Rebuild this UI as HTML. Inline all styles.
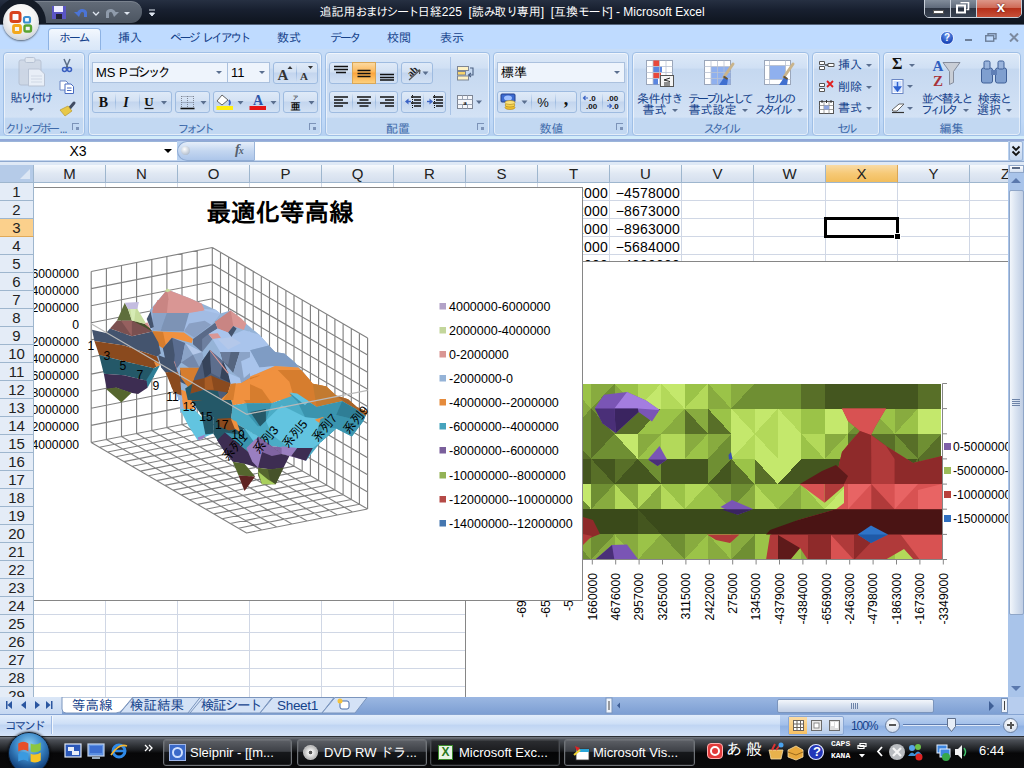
<!DOCTYPE html>
<html lang="ja">
<head>
<meta charset="utf-8">
<title>Microsoft Excel</title>
<style>
*{box-sizing:border-box;margin:0;padding:0}
html,body{width:1024px;height:768px;overflow:hidden;background:#fff}
body{position:relative;font-family:"Liberation Sans","IPAGothic",sans-serif;font-size:12px;color:#15428b}
.abs{position:absolute}
#titlebar{left:0;top:0;width:1024px;height:25px;background:linear-gradient(#263042 0,#182030 40%,#0e141e 100%);border-bottom:1px solid #56647a}
#title{left:0;top:5px;width:1024px;text-align:center;color:#fff;font-size:12px;letter-spacing:0px;white-space:nowrap}
#tabrow{left:0;top:25px;width:1024px;height:24px;background:#bfdbff}
#ribbon{left:0;top:49px;width:1024px;height:90px;background:linear-gradient(#c6dcf7,#bfd8f7 80%,#b4cff0)}
.tab{top:31px;font-size:12px;color:#15428b;white-space:nowrap}
.grp{top:52px;height:84px;border:1px solid #9fbfe6;border-radius:4px;background:linear-gradient(#dde9f8 0,#d0e0f4 18%,#c5d8f0 20%,#d3e2f5 78%,#c2d8f2 80%,#c2d8f2 100%);box-shadow:inset 0 0 0 1px rgba(255,255,255,.55)}
.glabel{bottom:-1.5px;left:0;right:0;height:15px;text-align:center;font-size:12px;color:#3e6aaa;line-height:15px;white-space:nowrap}
#fbar{left:0;top:139px;width:1024px;height:26px;background:#b9d1f0}
#sheet{left:0;top:165px;width:1010px;height:532px;background:#fff;overflow:hidden}
.ch{top:0;height:18px;border-right:1px solid #9eb6ce;border-bottom:1px solid #9eb6ce;background:linear-gradient(#f6f9fd,#e0e8f3 50%,#d5dfee);text-align:center;font-size:15px;line-height:18px;color:#222}
.rh{z-index:5;left:0;width:34px;height:18px;border-right:1px solid #9eb6ce;border-bottom:1px solid #9eb6ce;background:#e4ecf7;text-align:center;font-size:15px;line-height:17px;color:#222}

.bg{height:22px;border:1px solid #9ebbe0;border-radius:3px;background:linear-gradient(#dfeaf8 0,#d3e1f3 45%,#c3d5ee 50%,#d2e1f4 100%)}
.sep{top:1px;width:1px;height:18px;background:linear-gradient(rgba(158,187,224,0),#9ebbe0 50%,rgba(158,187,224,0))}
.combo{height:21px;border:1px solid #abc1de;background:#eef4fc;color:#000;font-size:13px;line-height:19px;padding-left:3px;white-space:nowrap}
.dd{width:0;height:0;border-left:3px solid transparent;border-right:3px solid transparent;border-top:3px solid #5a6f8f}
.big{font-size:12px;line-height:12px;text-align:center;white-space:nowrap;color:#15428b}
.launch{width:7px;height:7px;border-left:1px solid #7c93b8;border-top:1px solid #7c93b8;bottom:5px}
.launch:after{content:"";position:absolute;right:0;bottom:0;width:3px;height:3px;background:#7c93b8}

.cv{margin-top:1px;height:17px;text-align:right;font-size:14px;letter-spacing:.2px;line-height:19px;color:#000;white-space:nowrap;overflow:hidden;font-family:"Liberation Sans","IPAGothic",sans-serif}

#fbar .wh{background:#fff;border-top:1px solid #9bb5d9;border-bottom:1px solid #c5d6ee}
.tbtn{top:739px;height:27px;border:1px solid #6f7378;border-radius:3px;background:linear-gradient(#5d6066 0,#3e4147 45%,#16181b 50%,#0b0c0e 100%);color:#fff;font-size:13px;line-height:25px;white-space:nowrap;overflow:hidden;box-shadow:inset 0 0 0 1px rgba(255,255,255,.08)}
.tbtn span{position:absolute;left:26px;top:0}
.stab{top:698px;height:16px;font-size:13.5px;line-height:16px;color:#15428b;white-space:nowrap}
.k{letter-spacing:-1.6px}
</style>
</head>
<body>
<div id="titlebar" class="abs"></div>
<div id="title" class="abs">追記用<span class="k">おまけシート</span>日経225&nbsp; [読<span class="k">み</span>取<span class="k">り</span>専用]&nbsp; [互換<span class="k">モード</span>] - Microsoft Excel</div>
<div id="tabrow" class="abs"></div>
<div id="ribbon" class="abs"></div>
<!-- window controls -->
<div class="abs" style="left:924px;top:-3px;width:98px;height:21px;border:1px solid #c9d0da;border-radius:0 0 5px 5px;overflow:hidden;background:#39414e">
  <div class="abs" style="left:0;top:0;width:26px;height:20px;background:linear-gradient(#8a95a3 0,#606b7b 48%,#2c3442 52%,#3a4454 100%);border-right:1px solid #c9d0da"></div>
  <div class="abs" style="left:26px;top:0;width:26px;height:20px;background:linear-gradient(#8a95a3 0,#606b7b 48%,#2c3442 52%,#3a4454 100%);border-right:1px solid #c9d0da"></div>
  <div class="abs" style="left:52px;top:0;width:46px;height:20px;background:linear-gradient(#e0a296 0,#cf6b58 48%,#b5301a 52%,#c9533c 100%)"></div>
  <div class="abs" style="left:8px;top:12px;width:11px;height:4px;background:#fff;border:1px solid #555"></div>
  <svg class="abs" style="left:31px;top:4px" width="14" height="12" viewBox="0 0 14 12"><path d="M4.5 0.5h8v7h-2" fill="none" stroke="#fff" stroke-width="1.6"/><rect x="1" y="3.5" width="8" height="7" fill="none" stroke="#fff" stroke-width="2"/></svg>
  <div class="abs" style="left:66px;top:0px;width:20px;color:#fff;font:bold 15px 'Liberation Sans',sans-serif;text-align:center;text-shadow:0 0 2px #400">x</div>
</div>
<!-- office button -->
<div class="abs" style="left:3px;top:4px;width:36px;height:36px;border-radius:50%;background:radial-gradient(circle at 50% 35%,#ffffff 0,#f4f4f4 45%,#d9dce0 72%,#a9afb8 100%);box-shadow:0 1px 2px rgba(0,0,0,.55);z-index:3"></div>
<svg class="abs" style="left:8px;top:9px;z-index:4" width="26" height="26" viewBox="0 0 26 26">
 <rect x="3" y="3.500" width="9" height="9" rx="2" fill="none" stroke="#d8431d" stroke-width="3"/>
 <rect x="16" y="8" width="6" height="5.500" rx="1.500" fill="none" stroke="#3a8fd0" stroke-width="2.200"/>
 <rect x="5.500" y="16.500" width="7" height="7" rx="1.500" fill="none" stroke="#f3a81c" stroke-width="2.800"/>
 <rect x="16.500" y="16.500" width="6.500" height="6" rx="1.500" fill="none" stroke="#58a430" stroke-width="2.400"/>
</svg>
<!-- QAT -->
<div class="abs" style="left:30px;top:1px;width:112px;height:22px;border-radius:0 11px 11px 0;background:linear-gradient(#626b78,#4c5561);border-top:1px solid #7a828e"></div>
<div class="abs" style="left:0;top:0;width:60px;height:24px;overflow:hidden"><div class="abs" style="left:-4px;top:-3px;width:50px;height:50px;border-radius:50%;background:#141b27"></div></div>
<svg class="abs" style="left:50px;top:4px" width="110" height="18" viewBox="0 0 110 18">
 <rect x="2" y="2" width="14" height="13" fill="#5a55c4"/><rect x="4" y="2" width="9" height="6" fill="#eef"/><rect x="6" y="10" width="6" height="5" fill="#223"/>
 <path d="M27 10c0-5 8-7 10-2v5h-3v-4c-1-2-4-1-4 1z" fill="#4b74d6"/><path d="M24 8l5 5 2-5z" fill="#4b74d6"/>
 <path d="M43 8l3 3 3-3" fill="none" stroke="#dfe6f0" stroke-width="1.3"/>
 <path d="M66 10c0-5-8-7-10-2v6h3v-5c1-2 4-1 4 1z" fill="#8f9bab"/><path d="M69 8l-5 5-2-5z" fill="#8f9bab"/>
 <path d="M74 8l3 3 3-3z" fill="#dfe6f0"/>
 <path d="M99 6h6M99.500 9l2.500 3 2.500-3z" stroke="#dfe6f0" fill="#dfe6f0" stroke-width="1"/>
</svg>
<!-- tabs -->
<div class="abs" style="left:48px;top:28px;width:53px;height:22px;border:1px solid #8db2e3;border-bottom:none;border-radius:4px 4px 0 0;background:linear-gradient(#f3f8fe,#e1ecfa 60%,#d9e7f8)"></div>
<div class="abs tab" style="left:59px;letter-spacing:-2.3px">ホーム</div>
<div class="abs tab" style="left:118px">挿入</div>
<div class="abs tab" style="left:170px;letter-spacing:-2.6px;word-spacing:3px">ページ レイアウト</div>
<div class="abs tab" style="left:277px">数式</div>
<div class="abs tab" style="left:330px;letter-spacing:-2.3px">データ</div>
<div class="abs tab" style="left:387px">校閲</div>
<div class="abs tab" style="left:440px">表示</div>
<!-- help & mdi controls -->
<div class="abs" style="left:940px;top:31px;width:14px;height:14px;border-radius:50%;background:radial-gradient(circle at 50% 30%,#6f9cf0,#1b46b8 70%);border:1px solid #dfeaff;color:#fff;font:bold 10px 'Liberation Sans',sans-serif;text-align:center;line-height:12px">?</div>
<div class="abs" style="left:965px;top:39px;width:7px;height:2px;background:#6d7f99"></div>
<svg class="abs" style="left:985px;top:33px" width="12" height="9" viewBox="0 0 12 9"><path d="M3 2V0.800h8v5h-2" fill="none" stroke="#6d7f99" stroke-width="1.4"/><rect x="0.700" y="2.700" width="8" height="5.500" fill="none" stroke="#6d7f99" stroke-width="1.4"/></svg>
<svg class="abs" style="left:1009px;top:33px" width="10" height="9" viewBox="0 0 10 9"><path d="M1 0.500l8 8M9 0.500l-8 8" stroke="#7c8aa0" stroke-width="2"/></svg>


<!--RIBBON--><div class="abs grp" style="left:3px;width:82px"><div class="abs glabel" style="text-align:left;padding-left:1px;letter-spacing:0"><span style="letter-spacing:-3.4px">クリップボー</span><span style="letter-spacing:-1px;margin-left:3px">...</span></div><div class="abs launch" style="right:5px"></div></div>
<div class="abs grp" style="left:88px;width:234px"><div class="abs glabel" style="letter-spacing:-3.5px;left:105.5px;right:auto;width:80px;margin-left:-40px">フォント</div><div class="abs launch" style="right:5px"></div></div>
<div class="abs grp" style="left:325px;width:165px"><div class="abs glabel" style="letter-spacing:0;left:72px;right:auto;width:80px;margin-left:-40px">配置</div><div class="abs launch" style="right:5px"></div></div>
<div class="abs grp" style="left:493px;width:136px"><div class="abs glabel" style="letter-spacing:0;left:57.5px;right:auto;width:80px;margin-left:-40px">数値</div><div class="abs launch" style="right:5px"></div></div>
<div class="abs grp" style="left:632px;width:177px"><div class="abs glabel" style="letter-spacing:-3.5px;left:87.5px;right:auto;width:80px;margin-left:-40px">スタイル</div></div>
<div class="abs grp" style="left:812px;width:68px"><div class="abs glabel" style="letter-spacing:-3.5px;left:32.5px;right:auto;width:80px;margin-left:-40px">セル</div></div>
<div class="abs grp" style="left:883px;width:138px"><div class="abs glabel" style="letter-spacing:0;left:67.5px;right:auto;width:80px;margin-left:-40px">編集</div></div>
<div class="abs big" style="left:0px;top:92px;width:62px;font-size:12px;letter-spacing:-1.7px">貼り付け</div>
<div class="abs dd" style="left:28px;top:108px"></div>
<div class="abs combo" style="left:92px;top:62px;width:136px">MS P<span style="letter-spacing:-3px">ゴシック</span></div>
<div class="abs dd" style="left:216px;top:71px"></div>
<div class="abs combo" style="left:227px;top:62px;width:43px">11</div>
<div class="abs dd" style="left:259px;top:71px"></div>
<div class="abs bg" style="left:273px;top:62px;width:45px"><div class="abs sep" style="left:22px"></div></div>
<div class="abs bg" style="left:92px;top:91px;width:80px"><div class="abs sep" style="left:22px"></div><div class="abs sep" style="left:46px"></div></div>
<div class="abs bg" style="left:175px;top:91px;width:35px"></div>
<div class="abs bg" style="left:213px;top:91px;width:67px"></div>
<div class="abs bg" style="left:283px;top:91px;width:35px"></div>
<div class="abs bg" style="left:329px;top:62px;width:69px"><div class="abs" style="left:22px;top:-1px;width:24px;height:22px;background:linear-gradient(#fbd9a0,#fdb759 45%,#fca43c 50%,#fdd07c);border:1px solid #d9a757"></div></div>
<div class="abs bg" style="left:401px;top:62px;width:32px"></div>
<div class="abs bg" style="left:329px;top:91px;width:69px"><div class="abs sep" style="left:22px"></div><div class="abs sep" style="left:45px"></div></div>
<div class="abs bg" style="left:401px;top:91px;width:45px"><div class="abs sep" style="left:21px"></div></div>
<div class="abs" style="left:450px;top:57px;width:1px;height:58px;background:#a9c3e6"></div>
<div class="abs combo" style="left:497px;top:62px;width:128px">標準</div>
<div class="abs dd" style="left:614px;top:71px"></div>
<div class="abs bg" style="left:497px;top:91px;width:80px"><div class="abs sep" style="left:33px"></div><div class="abs sep" style="left:57px"></div></div>
<div class="abs bg" style="left:580px;top:91px;width:45px"><div class="abs sep" style="left:21px"></div></div>
<div class="abs big" style="left:660px;top:93px;width:100px;margin-left:-50px;font-size:12px;letter-spacing:-.5px">条件付き</div>
<div class="abs big" style="left:660px;top:104px;width:100px;margin-left:-50px;font-size:12px;letter-spacing:0">書式<span class="dd" style="display:inline-block;vertical-align:middle;margin-left:5px"></span></div>
<div class="abs big" style="left:719.5px;top:93px;width:100px;margin-left:-50px;font-size:12px;letter-spacing:-3px">テーブルとして</div>
<div class="abs big" style="left:718px;top:104px;width:100px;margin-left:-50px;font-size:12px;letter-spacing:0">書式設定<span class="dd" style="display:inline-block;vertical-align:middle;margin-left:5px"></span></div>
<div class="abs big" style="left:779px;top:93px;width:100px;margin-left:-50px;font-size:12px;letter-spacing:-2.2px">セルの</div>
<div class="abs big" style="left:779px;top:104px;width:100px;margin-left:-50px;font-size:12px;letter-spacing:-3.5px">スタイル<span class="dd" style="display:inline-block;vertical-align:middle;margin-left:8px"></span></div>
<div class="abs big" style="left:838px;top:59px;font-size:12px">挿入</div><div class="abs dd" style="left:866px;top:64px"></div>
<div class="abs big" style="left:838px;top:80.5px;font-size:12px">削除</div><div class="abs dd" style="left:866px;top:85.5px"></div>
<div class="abs big" style="left:838px;top:102px;font-size:12px">書式</div><div class="abs dd" style="left:866px;top:107px"></div>
<div class="abs" style="left:892px;top:55px;font:bold 16px 'Liberation Serif',serif;color:#111">Σ</div><div class="abs dd" style="left:909px;top:64px"></div>
<div class="abs dd" style="left:907px;top:85px"></div><div class="abs dd" style="left:907px;top:107px"></div>
<div class="abs big" style="left:946.5px;top:93px;width:100px;margin-left:-50px;font-size:12px;letter-spacing:-2px">並べ替えと</div>
<div class="abs big" style="left:945px;top:104px;width:100px;margin-left:-50px;font-size:12px;letter-spacing:-3.5px">フィルタ<span class="dd" style="display:inline-block;vertical-align:middle;margin-left:8px"></span></div>
<div class="abs big" style="left:994.5px;top:93px;width:100px;margin-left:-50px;font-size:12px;letter-spacing:-1px">検索と</div>
<div class="abs big" style="left:994.5px;top:104px;width:100px;margin-left:-50px;font-size:12px;letter-spacing:0">選択<span class="dd" style="display:inline-block;vertical-align:middle;margin-left:5px"></span></div>
<svg class="abs" style="left:0;top:0" width="1024" height="140" viewBox="0 0 1024 140">
<g opacity=".75"><rect x="19" y="60" width="22" height="25" rx="2" fill="#cfd6e2" stroke="#aeb8c9"/><rect x="25" y="57.500" width="10" height="5" rx="1.500" fill="#e4e8ef" stroke="#aeb8c9"/><path d="M28.500 69h11l5 5v12h-16z" fill="#f4f6fa" stroke="#b4bccb"/><path d="M31 76h11M31 79h11M31 82h11" stroke="#d2d8e2"/></g>
<path d="M64 59l4 9M70 59l-4 9" stroke="#5a6d86" stroke-width="1.500"/><circle cx="64.500" cy="69.500" r="2" fill="none" stroke="#3a5fc0" stroke-width="1.500"/><circle cx="69.500" cy="69.500" r="2" fill="none" stroke="#3a5fc0" stroke-width="1.500"/>
<path d="M60 81h6l2 2v7h-8z" fill="#fff" stroke="#6a86c4"/><path d="M65 84h6l2.500 2.500v7H65z" fill="#fff" stroke="#4a6cc0"/><path d="M67 88h4.500M67 90.500h4.500" stroke="#4a6cc0"/>
<path d="M74 103l-5 6" stroke="#3f4b63" stroke-width="3" stroke-linecap="round"/><path d="M60 110l8-4 4 5-7 5z" fill="#e8c848" stroke="#b89a30" stroke-width=".7"/>
<text x="103.500" y="107" text-anchor="middle" font-family="'Liberation Serif',serif" font-weight="bold" font-size="14" fill="#111">B</text>
<text x="126" y="107" text-anchor="middle" font-family="'Liberation Serif',serif" font-style="italic" font-weight="bold" font-size="14" fill="#111">I</text>
<text x="149" y="106" text-anchor="middle" font-family="'Liberation Serif',serif" font-weight="bold" font-size="13" fill="#111">U</text><path d="M144.500 108.500h9" stroke="#111" stroke-width="1.200"/>
<path d="M161 101h6l-3 3.500z" fill="#5a6f8f"/>
<path d="M181.500 96v12M187.500 96v12M193.500 96v12M181.500 96.500h12M181.500 102.500h12" stroke="#7d8594" stroke-dasharray="1 1"/><path d="M180.500 108.500h14" stroke="#111" stroke-width="1.600"/><path d="M200.500 101h6l-3 3.500z" fill="#5a6f8f"/>
<path d="M222 95l6 5-6 5-5-4z" fill="#fff" stroke="#555" stroke-width=".9"/><path d="M229 100q2 3 0 5" stroke="#3a62c4" stroke-width="1.800" fill="none"/><rect x="216.500" y="106" width="16.500" height="4" fill="#ffee10"/><path d="M237.500 101h6l-3 3.500z" fill="#5a6f8f"/>
<text x="258" y="104.500" text-anchor="middle" font-family="'Liberation Serif',serif" font-weight="bold" font-size="14" fill="#2d55a8">A</text><rect x="249.500" y="106" width="16.500" height="4" fill="#e61616"/><path d="M270.500 101h6l-3 3.500z" fill="#5a6f8f"/>
<text x="295.500" y="100" text-anchor="middle" font-family="'Liberation Sans','IPAGothic',sans-serif" font-size="6" fill="#111">ア</text><text x="295.500" y="109.500" text-anchor="middle" font-family="'Liberation Sans','IPAGothic',sans-serif" font-size="10" font-weight="bold" fill="#111">亜</text><path d="M308.500 101h6l-3 3.500z" fill="#5a6f8f"/>
<text x="283" y="79.500" text-anchor="middle" font-family="'Liberation Serif',serif" font-weight="bold" font-size="15" fill="#333">A</text><path d="M287.500 69l2.500-3 2.500 3z" fill="#333"/>
<text x="304" y="79.500" text-anchor="middle" font-family="'Liberation Serif',serif" font-weight="bold" font-size="11" fill="#333">A</text><path d="M308 66h5l-2.500 3z" fill="#333"/>
<path d="M334 66.500h14M334 69.500h14M336 72.500h10" stroke="#111" stroke-width="1.300"/>
<path d="M357.500 70.500h13M357.500 73.500h13M357.500 76.500h13" stroke="#111" stroke-width="1.300"/>
<path d="M380 74.500h14M380 77.500h14M380 80h14" stroke="#111" stroke-width="1.300"/>
<g transform="translate(414 73) rotate(-45)"><text x="0" y="1" text-anchor="middle" font-family="'Liberation Serif',serif" font-size="10" font-weight="bold" fill="#222">ab</text></g><path d="M409 80l11-10M420 70l-4 .5M420 70l-.5 4" stroke="#555" stroke-width="1.200" fill="none"/><path d="M422.500 71.500h6l-3 3.500z" fill="#5a6f8f"/>
<path d="M334 97h14M334 100h9M334 103h14M334 106h9" stroke="#111" stroke-width="1.400"/>
<path d="M357 97h14M359.500 100h9M357 103h14M359.500 106h9" stroke="#111" stroke-width="1.400"/>
<path d="M380 97h14M385 100h9M380 103h14M385 106h9" stroke="#111" stroke-width="1.400"/>
<path d="M411 97h10M414 100h7M411 103h10M414 106h7" stroke="#111" stroke-width="1.400"/><path d="M412.500 95v14" stroke="#111" stroke-dasharray="1 1"/><path d="M405 101.500l3.500-3v6z" fill="#3a62c4"/><path d="M408 101.500h3" stroke="#3a62c4" stroke-width="1.400"/>
<path d="M433 97h10M436 100h7M433 103h10M436 106h7" stroke="#111" stroke-width="1.400"/><path d="M434.500 95v14" stroke="#111" stroke-dasharray="1 1"/><path d="M433 101.500l-3.500-3v6z" fill="#3a62c4"/><path d="M427 101.500h3" stroke="#3a62c4" stroke-width="1.400"/>
<rect x="457.500" y="66.500" width="11" height="4" fill="#fdf1c4" stroke="#7d8594"/><rect x="457.500" y="71.500" width="8" height="3.500" fill="#f6d36a" stroke="#7d8594"/><rect x="457.500" y="76" width="11" height="4" fill="#fdf1c4" stroke="#7d8594"/><path d="M470 68h3v7h-4M471 73l-2.500 2 2.500 2" fill="none" stroke="#4a5f80" stroke-width="1.100"/>
<rect x="457.500" y="95.500" width="15" height="13" fill="#f4f6fa" stroke="#7d8594"/><path d="M457.500 99.500h15M457.500 104.500h15M462.500 95.500v4M467.500 95.500v4M462.500 104.500v4M467.500 104.500v4" stroke="#9aa3b3"/><text x="465" y="104.500" text-anchor="middle" font-family="'Liberation Serif',serif" font-weight="bold" font-size="7" fill="#111">a</text><path d="M476 100.500h6l-3 3.500z" fill="#5a6f8f"/>
<rect x="501" y="94" width="14" height="8" rx="1" fill="#3c6ad0" stroke="#24408c"/><ellipse cx="508" cy="98" rx="4" ry="2.500" fill="#9fc0ff"/><ellipse cx="510" cy="107.500" rx="5" ry="2" fill="#f0c030" stroke="#a8821c" stroke-width=".6"/><ellipse cx="510" cy="105" rx="5" ry="2" fill="#f6d24c" stroke="#a8821c" stroke-width=".6"/><ellipse cx="510" cy="102.500" rx="5" ry="2" fill="#fbe27a" stroke="#a8821c" stroke-width=".6"/><path d="M521.500 100.500h6l-3 3.500z" fill="#5a6f8f"/>
<text x="543" y="107" text-anchor="middle" font-family="'Liberation Sans',sans-serif" font-size="13" fill="#111">%</text>
<text x="566" y="105" text-anchor="middle" font-family="'Liberation Serif',serif" font-weight="bold" font-size="18" fill="#111">,</text>
<g font-family="'Liberation Sans',sans-serif" font-weight="bold" font-size="8" fill="#111"><text x="589" y="101">.0</text><text x="586" y="108.500">.00</text><text x="607" y="101">.00</text><text x="612" y="108.500">.0</text></g><path d="M588 98h-4M585.500 96l-2 2 2 2" stroke="#3a62c4" stroke-width="1.200" fill="none"/><path d="M607 106h4M609.500 104l2 2-2 2" stroke="#3a62c4" stroke-width="1.200" fill="none"/>
<rect x="646.500" y="60.500" width="26" height="24" fill="#fff" stroke="#9aa6ba"/><rect x="653" y="60.500" width="6.500" height="6" fill="#e8483c"/><rect x="653" y="66.500" width="9" height="6" fill="#5a86e0"/><rect x="653" y="72.500" width="8" height="6" fill="#e8483c"/><rect x="653" y="78.500" width="5" height="6" fill="#5a86e0"/><path d="M646.500 66.500h26M646.500 72.500h26M646.500 78.500h26M653 60.500v24M659.500 60.500v24M666 60.500v24" stroke="#b9c2d2" stroke-width=".8" fill="none"/><rect x="660.500" y="75.500" width="13" height="11" fill="#f4f4f4" stroke="#555"/><path d="M670 78l-6 2 6 1.500M664 83h6M664 85h6" stroke="#111" fill="none" stroke-width=".9"/>
<rect x="704.500" y="60.500" width="26" height="24" fill="#fff" stroke="#9aa6ba"/><rect x="711" y="66.500" width="19.500" height="18" fill="#8fb0ee"/><path d="M704.500 66.500h26M704.500 72.500h26M704.500 78.500h26M711 60.500v24M717.500 60.500v24M724 60.500v24" stroke="#b9c2d2" stroke-width=".8" fill="none"/><path d="M733 64l-9 13" stroke="#c9b48c" stroke-width="3" stroke-linecap="round"/><path d="M725 76l-6 9h8l1-6z" fill="#3f6fd0"/><path d="M723.500 76.500l4 2.500" stroke="#6b5530" stroke-width="2"/>
<rect x="764.500" y="60.500" width="26" height="24" fill="#fff" stroke="#9aa6ba"/><rect x="769.500" y="65.500" width="16" height="14" fill="#8fb0ee" stroke="#b9c2d2"/><path d="M764.500 65.500h26M764.500 79.500h26M769.500 60.500v24M785.500 60.500v24" stroke="#b9c2d2" stroke-width=".8" fill="none"/><path d="M793 64l-9 13" stroke="#c9b48c" stroke-width="3" stroke-linecap="round"/><path d="M785 76l-6 9h8l1-6z" fill="#3f6fd0"/><path d="M783.500 76.500l4 2.500" stroke="#6b5530" stroke-width="2"/>
<path d="M819.500 61.500h5v3h-5zM819.500 66.500h5v3h-5z" fill="#fff" stroke="#555"/><path d="M828 63.500h6v3h-6z" fill="#fff" stroke="#555"/><path d="M825 65h3" stroke="#222" stroke-width="1.200"/>
<path d="M819.500 83.500h5v3h-5zM819.500 88.500h5v3h-5z" fill="#fff" stroke="#555"/><path d="M827 81l6 6M833 81l-6 6" stroke="#e02020" stroke-width="1.800"/>
<rect x="819.500" y="101.500" width="14" height="12" fill="#fff" stroke="#555"/><path d="M819.500 105.500h14M819.500 109.500h14M824 101.500v12M829 101.500v12" stroke="#888" stroke-width=".8"/><rect x="824" y="105.500" width="5" height="4" fill="#8fa6e0"/><path d="M822 100v3M826.500 100v3M831 100v3" stroke="#333" stroke-width="1"/>
<rect x="892" y="79.500" width="11" height="14" fill="#fff" stroke="#6a86c4"/><rect x="893.500" y="81" width="8" height="11" fill="#cfe0ff"/><path d="M897.500 82v5h-3l3 4 3-4h-3" fill="#2f62d0" stroke="#2f62d0" stroke-width="1.500"/>
<path d="M892 110l7-6h5l-7 7h-4z" fill="#fff" stroke="#555" stroke-width=".9"/><path d="M892 112.500h12" stroke="#333" stroke-width="1.200"/>
<text x="938" y="71" text-anchor="middle" font-family="'Liberation Serif',serif" font-weight="bold" font-size="15" fill="#2f5fc0">A</text><text x="938" y="85.500" text-anchor="middle" font-family="'Liberation Serif',serif" font-weight="bold" font-size="15" fill="#a8323a">Z</text><path d="M943 62.500h17l-6.500 9v11l-4 2v-13z" fill="#c9ced6" stroke="#7d8594" stroke-width=".9"/>
<rect x="981.500" y="68" width="11" height="15" rx="2" fill="#7f9fcf" stroke="#3f5f96"/><rect x="995.500" y="68" width="11" height="15" rx="2" fill="#7f9fcf" stroke="#3f5f96"/><rect x="984" y="61" width="6" height="8" rx="1.500" fill="#9ab4dc" stroke="#3f5f96"/><rect x="998" y="61" width="6" height="8" rx="1.500" fill="#9ab4dc" stroke="#3f5f96"/><rect x="991" y="70" width="6" height="5" fill="#5f7fb6"/>
</svg><!--/RIBBON-->
<div class="abs" style="left:0;top:136px;width:1024px;height:3px;background:#d3ecfa"></div><div id="fbar" class="abs"><div class="abs" style="left:0;top:0;width:1024px;height:2px;background:#92a8d8"></div><div class="abs" style="left:0;top:22px;width:1024px;height:4px;background:#dfe9f6;border-top:1px solid #8fa9cf"></div>
<div class="abs wh" style="left:0;top:2px;width:177px;height:20px"></div>
<div class="abs" style="left:0;top:4px;width:156px;text-align:center;font-size:14px;color:#000">X3</div>
<div class="abs" style="left:164px;top:10px;width:0;height:0;border-left:4px solid transparent;border-right:4px solid transparent;border-top:4px solid #000"></div>
<div class="abs" style="left:177px;top:2px;width:77px;height:20px;border-radius:10px 0 0 10px;background:linear-gradient(#e6eefa,#c3d6f0 50%,#adc6ea);border:1px solid #8fabd3;border-right:none"></div>
<div class="abs" style="left:181px;top:7px;width:9px;height:9px;border-radius:50%;background:radial-gradient(circle at 40% 35%,#fff,#b8c3d2 70%,#8794a8)"></div>
<div class="abs" style="left:235px;top:3px;font:italic bold 14px 'Liberation Serif',serif;color:#555f6e;letter-spacing:-1px">f<span style="font-size:10px">x</span></div>
<div class="abs wh" style="left:254px;top:2px;width:754px;height:20px;border-left:1px solid #9bb5d9"></div>
<div class="abs" style="left:1009px;top:2px;width:14px;height:20px;border:1px solid #9bb5d9;border-radius:2px;background:linear-gradient(#e6eefa,#c3d6f0)"></div>
<svg class="abs" style="left:1011px;top:6px" width="10" height="12" viewBox="0 0 10 12"><path d="M1.500 1.500l3.500 3.500 3.500-3.500M1.500 6.500l3.500 3.500 3.500-3.500" fill="none" stroke="#111" stroke-width="1.800"/></svg>
</div>
<div id="sheet" class="abs"><div class="abs" style="left:0;top:0;width:1010px;height:18px;background:linear-gradient(#f4f7fc,#e3ebf5 45%,#d6e0ef 55%,#dfe8f4)"></div><div class="abs ch" style="left:34px;width:72px;">M</div><div class="abs ch" style="left:106px;width:72px;">N</div><div class="abs ch" style="left:178px;width:72px;">O</div><div class="abs ch" style="left:250px;width:72px;">P</div><div class="abs ch" style="left:322px;width:72px;">Q</div><div class="abs ch" style="left:394px;width:72px;">R</div><div class="abs ch" style="left:466px;width:72px;">S</div><div class="abs ch" style="left:538px;width:72px;">T</div><div class="abs ch" style="left:610px;width:72px;">U</div><div class="abs ch" style="left:682px;width:72px;">V</div><div class="abs ch" style="left:754px;width:72px;">W</div><div class="abs ch" style="left:826px;width:72px;background:linear-gradient(#f9dba6,#f6c976 50%,#f2bd5c);border-right-color:#d9a657;">X</div><div class="abs ch" style="left:898px;width:72px;">Y</div><div class="abs ch" style="left:970px;width:72px;">Z</div><div class="abs" style="z-index:6;left:0;top:0;width:34px;height:18px;background:#b5cbe8;border-right:1px solid #9eb6ce;border-bottom:1px solid #9eb6ce"><div class="abs" style="right:3px;bottom:3px;width:0;height:0;border-left:10px solid transparent;border-bottom:10px solid #dbe6f4"></div></div><div class="abs" style="left:34px;top:35px;width:976px;height:1px;background:#d0d7e5"></div><div class="abs" style="left:34px;top:53px;width:976px;height:1px;background:#d0d7e5"></div><div class="abs" style="left:34px;top:71px;width:976px;height:1px;background:#d0d7e5"></div><div class="abs" style="left:34px;top:89px;width:976px;height:1px;background:#d0d7e5"></div><div class="abs" style="left:34px;top:107px;width:976px;height:1px;background:#d0d7e5"></div><div class="abs" style="left:34px;top:125px;width:976px;height:1px;background:#d0d7e5"></div><div class="abs" style="left:34px;top:143px;width:976px;height:1px;background:#d0d7e5"></div><div class="abs" style="left:34px;top:161px;width:976px;height:1px;background:#d0d7e5"></div><div class="abs" style="left:34px;top:179px;width:976px;height:1px;background:#d0d7e5"></div><div class="abs" style="left:34px;top:197px;width:976px;height:1px;background:#d0d7e5"></div><div class="abs" style="left:34px;top:215px;width:976px;height:1px;background:#d0d7e5"></div><div class="abs" style="left:34px;top:233px;width:976px;height:1px;background:#d0d7e5"></div><div class="abs" style="left:34px;top:251px;width:976px;height:1px;background:#d0d7e5"></div><div class="abs" style="left:34px;top:269px;width:976px;height:1px;background:#d0d7e5"></div><div class="abs" style="left:34px;top:287px;width:976px;height:1px;background:#d0d7e5"></div><div class="abs" style="left:34px;top:305px;width:976px;height:1px;background:#d0d7e5"></div><div class="abs" style="left:34px;top:323px;width:976px;height:1px;background:#d0d7e5"></div><div class="abs" style="left:34px;top:341px;width:976px;height:1px;background:#d0d7e5"></div><div class="abs" style="left:34px;top:359px;width:976px;height:1px;background:#d0d7e5"></div><div class="abs" style="left:34px;top:377px;width:976px;height:1px;background:#d0d7e5"></div><div class="abs" style="left:34px;top:395px;width:976px;height:1px;background:#d0d7e5"></div><div class="abs" style="left:34px;top:413px;width:976px;height:1px;background:#d0d7e5"></div><div class="abs" style="left:34px;top:431px;width:976px;height:1px;background:#d0d7e5"></div><div class="abs" style="left:34px;top:449px;width:976px;height:1px;background:#d0d7e5"></div><div class="abs" style="left:34px;top:467px;width:976px;height:1px;background:#d0d7e5"></div><div class="abs" style="left:34px;top:485px;width:976px;height:1px;background:#d0d7e5"></div><div class="abs" style="left:34px;top:503px;width:976px;height:1px;background:#d0d7e5"></div><div class="abs" style="left:34px;top:521px;width:976px;height:1px;background:#d0d7e5"></div><div class="abs" style="left:34px;top:539px;width:976px;height:1px;background:#d0d7e5"></div><div class="abs" style="left:105px;top:18px;width:1px;height:520px;background:#d0d7e5"></div><div class="abs" style="left:177px;top:18px;width:1px;height:520px;background:#d0d7e5"></div><div class="abs" style="left:249px;top:18px;width:1px;height:520px;background:#d0d7e5"></div><div class="abs" style="left:321px;top:18px;width:1px;height:520px;background:#d0d7e5"></div><div class="abs" style="left:393px;top:18px;width:1px;height:520px;background:#d0d7e5"></div><div class="abs" style="left:465px;top:18px;width:1px;height:520px;background:#d0d7e5"></div><div class="abs" style="left:537px;top:18px;width:1px;height:520px;background:#d0d7e5"></div><div class="abs" style="left:609px;top:18px;width:1px;height:520px;background:#d0d7e5"></div><div class="abs" style="left:681px;top:18px;width:1px;height:520px;background:#d0d7e5"></div><div class="abs" style="left:753px;top:18px;width:1px;height:520px;background:#d0d7e5"></div><div class="abs" style="left:825px;top:18px;width:1px;height:520px;background:#d0d7e5"></div><div class="abs" style="left:897px;top:18px;width:1px;height:520px;background:#d0d7e5"></div><div class="abs" style="left:969px;top:18px;width:1px;height:520px;background:#d0d7e5"></div><div class="abs" style="left:1041px;top:18px;width:1px;height:520px;background:#d0d7e5"></div><div class="abs rh" style="top:18px;">1</div><div class="abs rh" style="top:36px;">2</div><div class="abs rh" style="top:54px;background:#fbd08c;border-bottom-color:#e0aa59;">3</div><div class="abs rh" style="top:72px;">4</div><div class="abs rh" style="top:90px;">5</div><div class="abs rh" style="top:108px;">6</div><div class="abs rh" style="top:126px;">7</div><div class="abs rh" style="top:144px;">8</div><div class="abs rh" style="top:162px;">9</div><div class="abs rh" style="top:180px;">10</div><div class="abs rh" style="top:198px;">11</div><div class="abs rh" style="top:216px;">12</div><div class="abs rh" style="top:234px;">13</div><div class="abs rh" style="top:252px;">14</div><div class="abs rh" style="top:270px;">15</div><div class="abs rh" style="top:288px;">16</div><div class="abs rh" style="top:306px;">17</div><div class="abs rh" style="top:324px;">18</div><div class="abs rh" style="top:342px;">19</div><div class="abs rh" style="top:360px;">20</div><div class="abs rh" style="top:378px;">21</div><div class="abs rh" style="top:396px;">22</div><div class="abs rh" style="top:414px;">23</div><div class="abs rh" style="top:432px;">24</div><div class="abs rh" style="top:450px;">25</div><div class="abs rh" style="top:468px;">26</div><div class="abs rh" style="top:486px;">27</div><div class="abs rh" style="top:504px;">28</div><div class="abs rh" style="top:522px;">29</div><div class="abs rh" style="top:540px;">30</div><div class="abs" style="left:824px;top:52px;width:75px;height:21px;border:3px solid #000;border-right-width:3px"></div><div class="abs" style="left:894px;top:68px;width:7px;height:7px;background:#000;border:1px solid #fff"></div><div class="abs cv" style="left:530px;top:18px;width:78px">8752000</div><div class="abs cv" style="left:605px;top:18px;width:75px">−4578000</div><div class="abs cv" style="left:530px;top:36px;width:78px">8752000</div><div class="abs cv" style="left:605px;top:36px;width:75px">−8673000</div><div class="abs cv" style="left:530px;top:54px;width:78px">8752000</div><div class="abs cv" style="left:605px;top:54px;width:75px">−8963000</div><div class="abs cv" style="left:530px;top:72px;width:78px">8752000</div><div class="abs cv" style="left:605px;top:72px;width:75px">−5684000</div><div class="abs cv" style="left:530px;top:90px;width:78px">8752000</div><div class="abs cv" style="left:605px;top:90px;width:75px">−4000000</div><!--CHART2--><svg class="abs" style="left:0;top:-165px" width="1024" height="768" viewBox="0 0 1024 768" font-family="'Liberation Sans',sans-serif">
<rect x="465.5" y="261.5" width="560" height="460" fill="#fff" stroke="#868686"/>
<g shape-rendering="crispEdges">
<path d="M567.8 383.5H591.1V408.6z" fill="#9bc348"/>
<path d="M567.8 383.5V408.6H591.1z" fill="#88ab3f"/>
<path d="M591.1 383.5H614.5L591.1 408.6z" fill="#88ab3f"/>
<path d="M614.5 383.5V408.6H591.1z" fill="#6f8f33"/>
<path d="M614.5 383.5H637.8V408.6z" fill="#9bc348"/>
<path d="M614.5 383.5V408.6H637.8z" fill="#88ab3f"/>
<path d="M637.8 383.5H661.2L637.8 408.6z" fill="#b3d95a"/>
<path d="M661.2 383.5V408.6H637.8z" fill="#c4e86c"/>
<path d="M661.2 383.5H684.5V408.6z" fill="#c4e86c"/>
<path d="M661.2 383.5V408.6H684.5z" fill="#b3d95a"/>
<path d="M684.5 383.5H707.9L684.5 408.6z" fill="#9bc348"/>
<path d="M707.9 383.5V408.6H684.5z" fill="#b3d95a"/>
<path d="M707.9 383.5H731.2V408.6z" fill="#9bc348"/>
<path d="M707.9 383.5V408.6H731.2z" fill="#88ab3f"/>
<path d="M731.2 383.5H754.6L731.2 408.6z" fill="#88ab3f"/>
<path d="M754.6 383.5V408.6H731.2z" fill="#6f8f33"/>
<path d="M754.6 383.5H777.9V408.6z" fill="#6f8f33"/>
<path d="M754.6 383.5V408.6H777.9z" fill="#6f8f33"/>
<path d="M777.9 383.5H801.3L777.9 408.6z" fill="#6f8f33"/>
<path d="M801.3 383.5V408.6H777.9z" fill="#6f8f33"/>
<path d="M801.2 383.5H824.6V408.6z" fill="#586f28"/>
<path d="M801.2 383.5V408.6H824.6z" fill="#586f28"/>
<path d="M824.6 383.5H848L824.6 408.6z" fill="#44561f"/>
<path d="M848 383.5V408.6H824.6z" fill="#44561f"/>
<path d="M848 383.5H871.3V408.6z" fill="#44561f"/>
<path d="M848 383.5V408.6H871.3z" fill="#44561f"/>
<path d="M871.3 383.5H894.7L871.3 408.6z" fill="#44561f"/>
<path d="M894.7 383.5V408.6H871.3z" fill="#44561f"/>
<path d="M894.7 383.5H918V408.6z" fill="#44561f"/>
<path d="M894.7 383.5V408.6H918z" fill="#44561f"/>
<path d="M918 383.5H941.4L918 408.6z" fill="#586f28"/>
<path d="M941.4 383.5V408.6H918z" fill="#586f28"/>
<path d="M567.8 408.6H591.1L567.8 433.8z" fill="#88ab3f"/>
<path d="M591.1 408.6V433.8H567.8z" fill="#6f8f33"/>
<path d="M591.1 408.6H614.5V433.8z" fill="#6f8f33"/>
<path d="M591.1 408.6V433.8H614.5z" fill="#586f28"/>
<path d="M614.5 408.6H637.8L614.5 433.8z" fill="#6f8f33"/>
<path d="M637.8 408.6V433.8H614.5z" fill="#586f28"/>
<path d="M637.8 408.6H661.2L637.8 433.8z" fill="#586f28"/>
<path d="M661.2 408.6V433.8H637.8z" fill="#9bc348"/>
<path d="M661.2 408.6H684.5L661.2 433.8z" fill="#9bc348"/>
<path d="M684.5 408.6V433.8H661.2z" fill="#88ab3f"/>
<path d="M684.5 408.6H707.9V433.8z" fill="#88ab3f"/>
<path d="M684.5 408.6V433.8H707.9z" fill="#586f28"/>
<path d="M707.9 408.6H731.2V433.8z" fill="#9bc348"/>
<path d="M707.9 408.6V433.8H731.2z" fill="#586f28"/>
<path d="M731.2 408.6H754.6V433.8z" fill="#b3d95a"/>
<path d="M731.2 408.6V433.8H754.6z" fill="#c4e86c"/>
<path d="M754.6 408.6H777.9L754.6 433.8z" fill="#c4e86c"/>
<path d="M777.9 408.6V433.8H754.6z" fill="#b3d95a"/>
<path d="M777.9 408.6H801.3V433.8z" fill="#b3d95a"/>
<path d="M777.9 408.6V433.8H801.3z" fill="#c4e86c"/>
<path d="M801.2 408.6H824.6L801.2 433.8z" fill="#9bc348"/>
<path d="M824.6 408.6V433.8H801.2z" fill="#9bc348"/>
<path d="M824.6 408.6H848V433.8z" fill="#c4e86c"/>
<path d="M824.6 408.6V433.8H848z" fill="#c4e86c"/>
<path d="M848 408.6H871.3L848 433.8z" fill="#88ab3f"/>
<path d="M871.3 408.6V433.8H848z" fill="#6f8f33"/>
<path d="M871.3 408.6H894.7V433.8z" fill="#9bc348"/>
<path d="M871.3 408.6V433.8H894.7z" fill="#88ab3f"/>
<path d="M894.7 408.6H918L894.7 433.8z" fill="#88ab3f"/>
<path d="M918 408.6V433.8H894.7z" fill="#9bc348"/>
<path d="M918 408.6H941.4V433.8z" fill="#c4e86c"/>
<path d="M918 408.6V433.8H941.4z" fill="#c4e86c"/>
<path d="M567.8 433.8H591.1V458.9z" fill="#6f8f33"/>
<path d="M567.8 433.8V458.9H591.1z" fill="#586f28"/>
<path d="M591.1 433.8H614.5L591.1 458.9z" fill="#586f28"/>
<path d="M614.5 433.8V458.9H591.1z" fill="#6f8f33"/>
<path d="M614.5 433.8H637.8V458.9z" fill="#c4e86c"/>
<path d="M614.5 433.8V458.9H637.8z" fill="#6f8f33"/>
<path d="M637.8 433.8H661.2L637.8 458.9z" fill="#88ab3f"/>
<path d="M661.2 433.8V458.9H637.8z" fill="#9bc348"/>
<path d="M661.2 433.8H684.5V458.9z" fill="#b3d95a"/>
<path d="M661.2 433.8V458.9H684.5z" fill="#b3d95a"/>
<path d="M684.5 433.8H707.9L684.5 458.9z" fill="#88ab3f"/>
<path d="M707.9 433.8V458.9H684.5z" fill="#9bc348"/>
<path d="M707.9 433.8H731.2L707.9 458.9z" fill="#88ab3f"/>
<path d="M731.2 433.8V458.9H707.9z" fill="#6f8f33"/>
<path d="M731.2 433.8H754.6L731.2 458.9z" fill="#c4e86c"/>
<path d="M754.6 433.8V458.9H731.2z" fill="#b3d95a"/>
<path d="M754.6 433.8H777.9V458.9z" fill="#b3d95a"/>
<path d="M754.6 433.8V458.9H777.9z" fill="#c4e86c"/>
<path d="M777.9 433.8H801.3L777.9 458.9z" fill="#c4e86c"/>
<path d="M801.3 433.8V458.9H777.9z" fill="#c4e86c"/>
<path d="M801.2 433.8H824.6V458.9z" fill="#b3d95a"/>
<path d="M801.2 433.8V458.9H824.6z" fill="#9bc348"/>
<path d="M824.6 433.8H848L824.6 458.9z" fill="#88ab3f"/>
<path d="M848 433.8V458.9H824.6z" fill="#9bc348"/>
<path d="M848 433.8H871.3V458.9z" fill="#586f28"/>
<path d="M848 433.8V458.9H871.3z" fill="#586f28"/>
<path d="M871.3 433.8H894.7L871.3 458.9z" fill="#586f28"/>
<path d="M894.7 433.8V458.9H871.3z" fill="#586f28"/>
<path d="M894.7 433.8H918V458.9z" fill="#586f28"/>
<path d="M894.7 433.8V458.9H918z" fill="#6f8f33"/>
<path d="M918 433.8H941.4L918 458.9z" fill="#6f8f33"/>
<path d="M941.4 433.8V458.9H918z" fill="#586f28"/>
<path d="M567.8 458.9H591.1L567.8 484.1z" fill="#44561f"/>
<path d="M591.1 458.9V484.1H567.8z" fill="#44561f"/>
<path d="M591.1 458.9H614.5V484.1z" fill="#44561f"/>
<path d="M591.1 458.9V484.1H614.5z" fill="#586f28"/>
<path d="M614.5 458.9H637.8L614.5 484.1z" fill="#586f28"/>
<path d="M637.8 458.9V484.1H614.5z" fill="#44561f"/>
<path d="M637.8 458.9H661.2V484.1z" fill="#6f8f33"/>
<path d="M637.8 458.9V484.1H661.2z" fill="#44561f"/>
<path d="M661.2 458.9H684.5L661.2 484.1z" fill="#44561f"/>
<path d="M684.5 458.9V484.1H661.2z" fill="#44561f"/>
<path d="M684.5 458.9H707.9V484.1z" fill="#44561f"/>
<path d="M684.5 458.9V484.1H707.9z" fill="#44561f"/>
<path d="M707.9 458.9H731.2L707.9 484.1z" fill="#6f8f33"/>
<path d="M731.2 458.9V484.1H707.9z" fill="#44561f"/>
<path d="M731.2 458.9H754.6V484.1z" fill="#9bc348"/>
<path d="M731.2 458.9V484.1H754.6z" fill="#586f28"/>
<path d="M754.6 458.9H777.9V484.1z" fill="#c4e86c"/>
<path d="M754.6 458.9V484.1H777.9z" fill="#586f28"/>
<path d="M777.9 458.9H801.3L777.9 484.1z" fill="#c4e86c"/>
<path d="M801.3 458.9V484.1H777.9z" fill="#44561f"/>
<path d="M801.2 458.9H824.6V484.1z" fill="#44561f"/>
<path d="M801.2 458.9V484.1H824.6z" fill="#44561f"/>
<path d="M824.6 458.9H848L824.6 484.1z" fill="#44561f"/>
<path d="M848 458.9V484.1H824.6z" fill="#44561f"/>
<path d="M848 458.9H871.3L848 484.1z" fill="#6f8f33"/>
<path d="M871.3 458.9V484.1H848z" fill="#586f28"/>
<path d="M871.3 458.9H894.7V484.1z" fill="#586f28"/>
<path d="M871.3 458.9V484.1H894.7z" fill="#44561f"/>
<path d="M894.7 458.9H918L894.7 484.1z" fill="#44561f"/>
<path d="M918 458.9V484.1H894.7z" fill="#586f28"/>
<path d="M918 458.9H941.4V484.1z" fill="#586f28"/>
<path d="M918 458.9V484.1H941.4z" fill="#44561f"/>
<path d="M567.8 484.1H591.1V509.2z" fill="#c4e86c"/>
<path d="M567.8 484.1V509.2H591.1z" fill="#6f8f33"/>
<path d="M591.1 484.1H614.5L591.1 509.2z" fill="#6f8f33"/>
<path d="M614.5 484.1V509.2H591.1z" fill="#88ab3f"/>
<path d="M614.5 484.1H637.8V509.2z" fill="#88ab3f"/>
<path d="M614.5 484.1V509.2H637.8z" fill="#b3d95a"/>
<path d="M637.8 484.1H661.2L637.8 509.2z" fill="#b3d95a"/>
<path d="M661.2 484.1V509.2H637.8z" fill="#88ab3f"/>
<path d="M661.2 484.1H684.5V509.2z" fill="#9bc348"/>
<path d="M661.2 484.1V509.2H684.5z" fill="#b3d95a"/>
<path d="M684.5 484.1H707.9L684.5 509.2z" fill="#b3d95a"/>
<path d="M707.9 484.1V509.2H684.5z" fill="#9bc348"/>
<path d="M707.9 484.1H731.2V509.2z" fill="#88ab3f"/>
<path d="M707.9 484.1V509.2H731.2z" fill="#9bc348"/>
<path d="M731.2 484.1H754.6L731.2 509.2z" fill="#6f8f33"/>
<path d="M754.6 484.1V509.2H731.2z" fill="#88ab3f"/>
<path d="M754.6 484.1H777.9V509.2z" fill="#9bc348"/>
<path d="M754.6 484.1V509.2H777.9z" fill="#b3d95a"/>
<path d="M777.9 484.1H801.3L777.9 509.2z" fill="#9bc348"/>
<path d="M801.3 484.1V509.2H777.9z" fill="#88ab3f"/>
<path d="M801.2 484.1H824.6V509.2z" fill="#b3d95a"/>
<path d="M801.2 484.1V509.2H824.6z" fill="#9bc348"/>
<path d="M824.6 484.1H848L824.6 509.2z" fill="#b3d95a"/>
<path d="M848 484.1V509.2H824.6z" fill="#c4e86c"/>
<path d="M848 484.1H871.3V509.2z" fill="#88ab3f"/>
<path d="M848 484.1V509.2H871.3z" fill="#9bc348"/>
<path d="M871.3 484.1H894.7L871.3 509.2z" fill="#9bc348"/>
<path d="M894.7 484.1V509.2H871.3z" fill="#88ab3f"/>
<path d="M894.7 484.1H918V509.2z" fill="#88ab3f"/>
<path d="M894.7 484.1V509.2H918z" fill="#9bc348"/>
<path d="M918 484.1H941.4L918 509.2z" fill="#9bc348"/>
<path d="M941.4 484.1V509.2H918z" fill="#88ab3f"/>
<path d="M567.8 509.2H591.1L567.8 534.4z" fill="#3a4a1a"/>
<path d="M591.1 509.2V534.4H567.8z" fill="#3a4a1a"/>
<path d="M591.1 509.2H614.5V534.4z" fill="#3a4a1a"/>
<path d="M591.1 509.2V534.4H614.5z" fill="#3a4a1a"/>
<path d="M614.5 509.2H637.8L614.5 534.4z" fill="#3a4a1a"/>
<path d="M637.8 509.2V534.4H614.5z" fill="#3a4a1a"/>
<path d="M637.8 509.2H661.2V534.4z" fill="#3a4a1a"/>
<path d="M637.8 509.2V534.4H661.2z" fill="#44561f"/>
<path d="M661.2 509.2H684.5L661.2 534.4z" fill="#3a4a1a"/>
<path d="M684.5 509.2V534.4H661.2z" fill="#3a4a1a"/>
<path d="M684.5 509.2H707.9V534.4z" fill="#3a4a1a"/>
<path d="M684.5 509.2V534.4H707.9z" fill="#3a4a1a"/>
<path d="M707.9 509.2H731.2L707.9 534.4z" fill="#3a4a1a"/>
<path d="M731.2 509.2V534.4H707.9z" fill="#3a4a1a"/>
<path d="M731.2 509.2H754.6V534.4z" fill="#3a4a1a"/>
<path d="M731.2 509.2V534.4H754.6z" fill="#3a4a1a"/>
<path d="M754.6 509.2H777.9L754.6 534.4z" fill="#3a4a1a"/>
<path d="M777.9 509.2V534.4H754.6z" fill="#3a4a1a"/>
<path d="M777.9 509.2H801.3V534.4z" fill="#3a4a1a"/>
<path d="M777.9 509.2V534.4H801.3z" fill="#3a4a1a"/>
<path d="M801.2 509.2H824.6L801.2 534.4z" fill="#3a4a1a"/>
<path d="M824.6 509.2V534.4H801.2z" fill="#3a4a1a"/>
<path d="M824.6 509.2H848V534.4z" fill="#3a4a1a"/>
<path d="M824.6 509.2V534.4H848z" fill="#3a4a1a"/>
<path d="M848 509.2H871.3L848 534.4z" fill="#3a4a1a"/>
<path d="M871.3 509.2V534.4H848z" fill="#3a4a1a"/>
<path d="M871.3 509.2H894.7V534.4z" fill="#3a4a1a"/>
<path d="M871.3 509.2V534.4H894.7z" fill="#3a4a1a"/>
<path d="M894.7 509.2H918L894.7 534.4z" fill="#3a4a1a"/>
<path d="M918 509.2V534.4H894.7z" fill="#3a4a1a"/>
<path d="M918 509.2H941.4V534.4z" fill="#3a4a1a"/>
<path d="M918 509.2V534.4H941.4z" fill="#3a4a1a"/>
<path d="M567.8 534.4H591.1V559.5z" fill="#88ab3f"/>
<path d="M567.8 534.4V559.5H591.1z" fill="#6f8f33"/>
<path d="M591.1 534.4H614.5L591.1 559.5z" fill="#6f8f33"/>
<path d="M614.5 534.4V559.5H591.1z" fill="#88ab3f"/>
<path d="M614.5 534.4H637.8V559.5z" fill="#88ab3f"/>
<path d="M614.5 534.4V559.5H637.8z" fill="#9bc348"/>
<path d="M637.8 534.4H661.2L637.8 559.5z" fill="#9bc348"/>
<path d="M661.2 534.4V559.5H637.8z" fill="#88ab3f"/>
<path d="M661.2 534.4H684.5V559.5z" fill="#6f8f33"/>
<path d="M661.2 534.4V559.5H684.5z" fill="#88ab3f"/>
<path d="M684.5 534.4H707.9L684.5 559.5z" fill="#88ab3f"/>
<path d="M707.9 534.4V559.5H684.5z" fill="#9bc348"/>
<path d="M707.9 534.4H731.2V559.5z" fill="#9bc348"/>
<path d="M707.9 534.4V559.5H731.2z" fill="#88ab3f"/>
<path d="M731.2 534.4H754.6L731.2 559.5z" fill="#88ab3f"/>
<path d="M754.6 534.4V559.5H731.2z" fill="#6f8f33"/>
<path d="M754.6 534.4H777.9V559.5z" fill="#9bc348"/>
<path d="M754.6 534.4V559.5H777.9z" fill="#9bc348"/>
<path d="M777.9 534.4H801.3L777.9 559.5z" fill="#88ab3f"/>
<path d="M801.3 534.4V559.5H777.9z" fill="#9bc348"/>
<path d="M801.2 534.4H824.6V559.5z" fill="#9bc348"/>
<path d="M801.2 534.4V559.5H824.6z" fill="#88ab3f"/>
<path d="M824.6 534.4H848L824.6 559.5z" fill="#88ab3f"/>
<path d="M848 534.4V559.5H824.6z" fill="#6f8f33"/>
<path d="M848 534.4H871.3V559.5z" fill="#6f8f33"/>
<path d="M848 534.4V559.5H871.3z" fill="#88ab3f"/>
<path d="M871.3 534.4H894.7L871.3 559.5z" fill="#88ab3f"/>
<path d="M894.7 534.4V559.5H871.3z" fill="#9bc348"/>
<path d="M894.7 534.4H918V559.5z" fill="#9bc348"/>
<path d="M894.7 534.4V559.5H918z" fill="#b3d95a"/>
<path d="M918 534.4H941.4L918 559.5z" fill="#b3d95a"/>
<path d="M941.4 534.4V559.5H918z" fill="#88ab3f"/>
</g>
<polygon fill="#b03a3a" points="842,408.6 886,408.6 875,427 871,435 886,446 913,463 942,456 942,560 914,560 904,549 885,560 808,560 800,548 790,560 766,560 770,535 798,520 836,509.3 846,509.3 846,484.1 844,480 838,469 842,452 852,440 860,431 848,421"/>
<polygon fill="#d85252" points="842,408.6 886,408.6 875,427 871,435 860,431 848,421"/>
<polygon fill="#8e2a2a" points="871,435 886,446 913,463 942,456 942,484.1 844,484.1 838,469 842,452 852,440 860,431"/>
<polygon fill="#b03a3a" points="871,435 886,446 894.6,459 894.6,484.1 871.3,484.1 871.3,459"/>
<polygon fill="#5e1a1a" points="822,471 800,484.1 844,484.1 848,476 836,465"/>
<polygon fill="#d85252" points="799.3,484.1 824.6,484.1 824.6,502.8"/>
<polygon fill="#b03a3a" points="824.6,484.1 846.3,484.1 824.6,502.8"/>
<polygon fill="#d85252" points="844,484.1 942,484.1 942,509.3 836,509.3 844,503"/>
<polygon fill="#e86464" points="848,484.1 871.3,484.1 848,509.3"/>
<polygon fill="#e86464" points="894.6,484.1 918,484.1 894.6,509.3"/>
<polygon fill="#e86464" points="918,490 942,484.1 942,509.3 918,509.3"/>
<polygon fill="#b03a3a" points="871.3,484.1 894.6,509.3 871.3,509.3"/>
<polygon fill="#4a1414" points="798,520 836,509.3 942,509.3 942,534.4 766,534.4 770,530"/>
<polygon fill="#8e2a2a" points="808,535 831,535 831,560 808,560"/>
<polygon fill="#5e1a1a" points="778,535 800,548 790,560 778,560"/>
<polygon fill="#d85252" points="831,535 854,560 831,560"/>
<polygon fill="#8e2a2a" points="854,535 878,535 854,560"/>
<polygon fill="#d85252" points="901,535 942,535 942,560 920,560"/>
<polygon fill="#b03a3a" points="707,534.6 739.5,534.6 730,543 716,540"/>
<polygon fill="#8e2a2a" points="583,517 593,520 600,534 590,538 583,541"/>
<polygon fill="#b03a3a" points="583,534 592,536 583,545"/>
<polygon fill="#7a55b5" points="594.8,408 604,394.8 627,392 646,400.5 659.5,410 652,421.4 638.6,412 615.7,432.9 602.4,423.3"/>
<polygon fill="#a47de0" points="614.4,408.6 627,392 646,400.5 659.5,410 637.8,408.6"/>
<polygon fill="#4a2f78" points="594.8,408.6 614.4,408.6 615.7,432.9 602.4,423.3"/>
<polygon fill="#3a2460" points="614.4,408.6 637.8,408.6 638.6,412 615.7,432.9"/>
<polygon fill="#7a55b5" points="648,459.5 659.5,446 667,459.5 657.6,466"/>
<polygon fill="#4a2f78" points="648,459.5 667,459.5 657.6,466"/>
<polygon fill="#7a55b5" points="720.5,507 732,500 753,509 737.6,514.8"/>
<polygon fill="#3a2460" points="720.5,509.3 753,509.3 737.6,514.8"/>
<polygon fill="#7a55b5" points="594.8,560 612,545 627,544.5 638.6,560"/>
<polygon fill="#4a2f78" points="594.8,560 612,545 614.4,560"/>
<polygon fill="#3a4fb0" points="728.5,455 731,452 732.5,459 729,459.5"/>
<polygon fill="#2f74c8" points="857.6,534.6 871,525.4 888,534.6 871,543"/>
<polygon fill="#1f5aa8" points="857.6,534.6 888,534.6 871,543"/>
<path d="M497 559.5H942.5V383.5M498.7 559.5v5M522.1 559.5v5M545.5 559.5v5M568.9 559.5v5M592.3 559.5v5M615.7 559.5v5M639.1 559.5v5M662.5 559.5v5M685.9 559.5v5M709.3 559.5v5M732.7 559.5v5M756.1 559.5v5M779.5 559.5v5M802.9 559.5v5M826.3 559.5v5M849.7 559.5v5M873.1 559.5v5M896.5 559.5v5M919.9 559.5v5M943.3 559.5v5M942.5 383.5h4.5M942.5 408.6h4.5M942.5 433.8h4.5M942.5 458.9h4.5M942.5 484.1h4.5M942.5 509.2h4.5M942.5 534.4h4.5M942.5 559.5h4.5" fill="none" stroke="#868686"/>
<g font-size="12.2" fill="#000" text-anchor="end">
<text transform="translate(503 573) rotate(-90)" x="0" y="0"></text>
<text transform="translate(526.4 573) rotate(-90)" x="0" y="0">-690000</text>
<text transform="translate(549.8 573) rotate(-90)" x="0" y="0">-650000</text>
<text transform="translate(573.2 573) rotate(-90)" x="0" y="0">-50000</text>
<text transform="translate(596.6 573) rotate(-90)" x="0" y="0">1660000</text>
<text transform="translate(620 573) rotate(-90)" x="0" y="0">4676000</text>
<text transform="translate(643.4 573) rotate(-90)" x="0" y="0">2957000</text>
<text transform="translate(666.8 573) rotate(-90)" x="0" y="0">3265000</text>
<text transform="translate(690.2 573) rotate(-90)" x="0" y="0">3115000</text>
<text transform="translate(713.6 573) rotate(-90)" x="0" y="0">2422000</text>
<text transform="translate(737 573) rotate(-90)" x="0" y="0">275000</text>
<text transform="translate(760.4 573) rotate(-90)" x="0" y="0">1345000</text>
<text transform="translate(783.8 573) rotate(-90)" x="0" y="0">-4379000</text>
<text transform="translate(807.2 573) rotate(-90)" x="0" y="0">-4384000</text>
<text transform="translate(830.6 573) rotate(-90)" x="0" y="0">-6569000</text>
<text transform="translate(854 573) rotate(-90)" x="0" y="0">-2463000</text>
<text transform="translate(877.4 573) rotate(-90)" x="0" y="0">-4798000</text>
<text transform="translate(900.8 573) rotate(-90)" x="0" y="0">-1863000</text>
<text transform="translate(924.2 573) rotate(-90)" x="0" y="0">-1673000</text>
<text transform="translate(947.6 573) rotate(-90)" x="0" y="0">-3349000</text>
</g>
<g font-size="12.2" fill="#000">
<rect x="944" y="443" width="7" height="7" fill="#7e5fa8"/><text x="953" y="451.3">0-5000000</text>
<rect x="944" y="467" width="7" height="7" fill="#9bbb59"/><text x="953" y="475.3">-5000000-0</text>
<rect x="944" y="491" width="7" height="7" fill="#b8403c"/><text x="953" y="499.3">-10000000--5000000</text>
<rect x="944" y="515" width="7" height="7" fill="#2f6fc0"/><text x="953" y="523.3">-15000000--10000000</text>
</g></svg><!--/CHART2--><!--CHART1--><svg class="abs" style="left:0;top:-165px" width="1024" height="768" viewBox="0 0 1024 768" font-family="'Liberation Sans','IPAGothic',sans-serif">
<rect x="-30.5" y="187.5" width="613" height="413" fill="#fff" stroke="#868686"/>
<text x="280" y="221" text-anchor="middle" font-size="24.5" font-weight="bold" fill="#000" font-family="'Liberation Sans','IPAGothic',sans-serif">最適化等高線</text>
<path d="M91.2 271.5L91.2 442.5M106.4 268.5L106.4 439.5M121.5 265.5L121.5 436.5M136.6 262.5L136.6 433.5M151.8 259.5L151.8 430.5M166.9 256.5L166.9 427.5M182 253.5L182 424.5M197.2 250.5L197.2 421.5M212.3 247.5L212.3 418.5M91.2 271.5L212.3 247.5M91.2 288.6L212.3 264.6M91.2 305.7L212.3 281.7M91.2 322.8L212.3 298.8M91.2 339.9L212.3 315.9M91.2 357L212.3 333M91.2 374.1L212.3 350.1M91.2 391.2L212.3 367.2M91.2 408.3L212.3 384.3M91.2 425.4L212.3 401.4M91.2 442.5L212.3 418.5M212.3 247.5L212.3 418.5M220.5 252.3L220.5 423.3M228.6 257L228.6 428M236.8 261.8L236.8 432.8M245 266.6L245 437.6M253.2 271.3L253.2 442.3M261.3 276.1L261.3 447.1M269.5 280.8L269.5 451.8M277.7 285.6L277.7 456.6M285.9 290.4L285.9 461.4M294 295.1L294 466.1M302.2 299.9L302.2 470.9M310.4 304.7L310.4 475.7M318.6 309.4L318.6 480.4M326.7 314.2L326.7 485.2M334.9 318.9L334.9 489.9M343.1 323.7L343.1 494.7M351.3 328.5L351.3 499.5M359.4 333.2L359.4 504.2M367.6 338L367.6 509M212.3 247.5L367.6 338M212.3 264.6L367.6 355.1M212.3 281.7L367.6 372.2M212.3 298.8L367.6 389.3M212.3 315.9L367.6 406.4M212.3 333L367.6 423.5M212.3 350.1L367.6 440.6M212.3 367.2L367.6 457.7M212.3 384.3L367.6 474.8M212.3 401.4L367.6 491.9M212.3 418.5L367.6 509M91.2 442.5L246.6 533M106.4 439.5L261.7 530M121.5 436.5L276.8 527M136.6 433.5L291.9 524M151.8 430.5L307.1 521M166.9 427.5L322.2 518M182 424.5L337.3 515M197.2 421.5L352.5 512M212.3 418.5L367.6 509M212.3 418.5L91.2 442.5M220.5 423.3L99.4 447.3M228.6 428L107.6 452M236.8 432.8L115.8 456.8M245 437.6L123.9 461.6M253.2 442.3L132.1 466.3M261.3 447.1L140.3 471.1M269.5 451.8L148.5 475.8M277.7 456.6L156.6 480.6M285.9 461.4L164.8 485.4M294 466.1L173 490.1M302.2 470.9L181.2 494.9M310.4 475.7L189.3 499.7M318.6 480.4L197.5 504.4M326.7 485.2L205.7 509.2M334.9 489.9L213.9 513.9M343.1 494.7L222 518.7M351.3 499.5L230.2 523.5M359.4 504.2L238.4 528.2M367.6 509L246.6 533" fill="none" stroke="#828282" stroke-width="1.15"/>
<polygon fill="#95b3d7" points="150,309.7 167.2,289.4 189.1,298 201.6,303.4 215.6,309.7 220.3,313.6 230.5,310.5 245.3,323 259.4,334.7 275,351.9 284.4,353.4 295.3,362.8 310,380 310,400 178.8,400 174.1,387.8 166.2,367.5 159.4,361.2 150,355"/>
<polygon fill="#d99694" points="153.1,307.3 167.2,289.4 189.1,298 201.6,303.4 203.9,308.9 189.1,311.2 153.1,312"/>
<polygon fill="#c98583" points="153.1,307.3 167.2,289.4 170.3,312 153.1,312"/>
<polygon fill="#c6dc9c" points="164.8,290.9 167.2,288.6 171.1,290.6 167.5,292.2"/>
<polygon fill="#7f9cc4" points="153.1,312 170.3,312 189.1,311.2 196.9,317.5 182.8,331.6 164.1,326.9 150,331.6 150,315.9"/>
<polygon fill="#a9c4ec" points="189.1,311.2 203.9,308.9 215.6,309.7 220.3,313.6 210.9,325.3 196.9,333.1 193.8,323.8"/>
<polygon fill="#95b3d7" points="170.3,312 189.1,311.2 182.8,331.6 175,323.8"/>
<polygon fill="#a9c4ec" points="212.5,333.1 223.4,326.9 228.1,326.9 225.8,334.7 231.2,335.5 243.8,330 259.4,334.7 268.8,345.6 250,350.3 237.5,351.9 223.4,348.8 218.8,339.4"/>
<polygon fill="#7f9cc4" points="250,350.3 268.8,345.6 275,351.9 284.4,353.4 295.3,362.8 298.4,367.5 275,365.9 259.4,367.5"/>
<polygon fill="#a9c4ec" points="237.5,351.9 250,350.3 259.4,367.5 275,365.9 242.2,380 234.4,367.5"/>
<polygon fill="#f0913f" points="242.2,380 275,365.9 298.4,367.5 310,380 310,400 225,400 231.2,387.8"/>
<polygon fill="#d67d2e" points="242.2,380 259.4,375.3 268.8,389.4 259.4,400 243.8,400"/>
<polygon fill="#f0913f" points="228.8,391.5 244.5,381.7 273.8,370 301.1,370 312.8,383.7 326.5,386.6 336.2,395.4 348,399.3 356.8,407.1 367.5,412 365.5,415.9 355.8,409.1 342.1,401.2 328.4,404.2 316.7,407.1 305,399.3 293.3,395.4 271.8,403.2 246.4,403.2 232.7,405.2"/>
<polygon fill="#d67d2e" points="277.7,370 301.1,370 312.8,383.7 326.5,386.6 316.7,407.1 305,399.3 293.3,395.4 289.4,381.7"/>
<polygon fill="#d67d2e" points="244.5,381.7 262,389.5 271.8,403.2 246.4,403.2 238.6,393.4"/>
<polygon fill="#c27a30" points="316.7,407.1 312.8,383.7 326.5,386.6 336.2,395.4 348,399.3 356.8,407.1 367.5,412 365.5,415.9 355.8,409.1 342.1,401.2 328.4,404.2"/>
<polygon fill="#a5632a" points="336.2,395.4 348,399.3 356.8,407.1 367.5,412 365.5,415.9 355.8,409.1 346,403.2"/>
<polygon fill="#4bacc6" points="232.7,405.2 246.4,403.2 271.8,403.2 293.3,395.4 305,399.3 316.7,407.1 328.4,404.2 342.1,401.2 355.8,409.1 365.5,415.9 363.6,420.8 351.9,436.4 336.2,428.6 320.6,442.3 306,460.8 289.4,448.1 271.8,446.2 258.1,436.4 244.5,428.6 230.8,420.8"/>
<polygon fill="#62c4e0" points="265.9,420.8 281.6,405.2 305,416.9 320.6,418.8 336.2,428.6 320.6,442.3 312.8,448.1 289.4,448.1 271.8,434.5"/>
<polygon fill="#3a94ae" points="246.4,403.2 271.8,403.2 265.9,420.8 258.1,426.6 248.4,414.9"/>
<polygon fill="#245868" points="250.3,412 265.9,409.1 265.9,420.8 260.1,426.6"/>
<polygon fill="#3a94ae" points="289.4,393.4 305,399.3 316.7,407.1 328.4,404.2 342.1,401.2 355.8,409.1 351.9,418.8 336.2,414.9 320.6,418.8 305,416.9 297.2,401.2"/>
<polygon fill="#62c4e0" points="289.4,392.5 297.2,393.4 308.9,401.2 305,405.2"/>
<polygon fill="#f0913f" points="314.8,419.8 322.6,416.9 328.4,420.8 320.6,423.7"/>
<polygon fill="#3a94ae" points="320.6,418.8 336.2,414.9 351.9,418.8 365.5,415.9 363.6,420.8 351.9,436.4 336.2,428.6 320.6,442.3 316.7,432.5"/>
<polygon fill="#2f7e96" points="342.1,401.2 355.8,409.1 365.5,415.9 351.9,418.8 336.2,414.9"/>
<polygon fill="#4bacc6" points="324.5,426.6 336.2,428.6 320.6,442.3 316.7,436.4"/>
<polygon fill="#8064a2" points="271.8,446.2 289.4,448.1 306,460.8 289.4,455.9 281.6,454"/>
<polygon fill="#9a7fc0" points="281.6,446.2 297.2,448.1 291.3,455.9 281.6,454"/>
<polygon fill="#3d2d52" points="297.2,448.1 312.8,448.1 306,460.8 291.3,455.9"/>
<polygon fill="#95b3d7" points="180,381.7 187.8,385.6 191.7,409.1 180,413"/>
<polygon fill="#f0913f" points="180,389.5 189.8,393.4 193.7,409.1 183.9,409.1"/>
<polygon fill="#62c4e0" points="180,409.1 193.7,409.1 205.4,420.8 213.2,433.5 197.6,440.3 187.8,424.7"/>
<polygon fill="#245868" points="201.5,414.9 213.2,416.9 213.2,433.5 205.4,434.5"/>
<polygon fill="#9a7fc0" points="197.6,437.4 205.4,434.5 203.4,438.4 198.6,440.3"/>
<polygon fill="#245868" points="191.7,389.5 228.8,391.5 232.7,405.2 230.8,420.8 244.5,428.6 238.6,434.5 224.9,452 213.2,433.5 213.2,416.9 201.5,414.9 191.7,401.2"/>
<polygon fill="#8a4a1e" points="187.8,385.6 203.4,377.8 228.8,391.5 209.3,399.3 191.7,401.2"/>
<polygon fill="#44546e" points="180,370 203.4,370 211.2,377.8 203.4,377.8 187.8,385.6 180,381.7"/>
<polygon fill="#8a4a1e" points="217.1,418.8 230.8,417.9 238.6,428.6 228.8,430.5 219.1,426.6"/>
<polygon fill="#f0913f" points="230.8,418.8 236.6,421.8 240.5,432.5 234.7,428.6"/>
<polygon fill="#3a94ae" points="224.9,432.5 238.6,434.5 244.5,428.6 258.1,436.4 248.4,452 238.6,444.2"/>
<polygon fill="#62c4e0" points="244.5,428.6 258.1,436.4 271.8,446.2 265.9,452 254.2,442.3"/>
<polygon fill="#3d2d52" points="217.1,440.3 224.9,432.5 238.6,444.2 248.4,452 258.1,436.4 271.8,446.2 281.6,454 289.4,455.9 283.5,467.7 271.8,469.6 258.1,467.7 244.5,463.8 232.7,461.8 224.9,452"/>
<polygon fill="#9a7fc0" points="246.4,448.1 256.2,438.4 262,452 258.1,467.7 252.3,461.8"/>
<polygon fill="#8064a2" points="258.1,436.4 271.8,446.2 281.6,454 271.8,455.9 262,452"/>
<polygon fill="#55662e" points="232.7,461.8 244.5,463.8 255.2,476.4 238.6,475.5"/>
<polygon fill="#55662e" points="258.1,467.7 271.8,469.6 283.5,467.7 275.7,484.3 262,484.3 258.1,475.5"/>
<polygon fill="#a9cf5e" points="258.1,471.6 267.9,479.4 275.7,484.3 262,484.3"/>
<polygon fill="#46522a" points="267.9,469.6 283.5,467.7 275.7,484.3 269.8,479.4"/>
<polygon fill="#5e2322" points="238.6,475.5 255.2,476.4 244.5,491.1"/>
<polygon fill="#d99694" points="152.6,310.4 157.8,300 189.1,300 202.1,305.2 204.7,310.4 193,313 152.6,313"/>
<polygon fill="#c98583" points="152.6,310.4 157.8,300 168.2,300 166.9,313 152.6,313"/>
<polygon fill="#a9c4ec" points="150,315.6 152.6,313 152.6,329.9 150,331.2"/>
<polygon fill="#8ba3c7" points="152.6,313 166.9,313 160.4,331.2 152.6,329.9"/>
<polygon fill="#7d93b5" points="166.9,313 189.1,313 183.9,331.2 160.4,331.2"/>
<polygon fill="#a2bce4" points="189.1,313 204.7,310.4 220.3,314.3 211.2,324.7 194.3,337.8 183.9,331.2"/>
<polygon fill="#8aa0c4" points="189.1,323.4 204.7,320.8 211.2,324.7 194.3,337.8 183.9,331.2"/>
<polygon fill="#f0913f" points="152.6,331.2 183.9,332.6 193,339.1 191.7,343 172.1,337.8 163,348.2 155.2,343"/>
<polygon fill="#d67d2e" points="152.6,331.2 163,331.9 165.6,344.3 163,348.2 155.2,343"/>
<polygon fill="#5a6a88" points="193,339.1 212.5,324.7 230.7,310.4 215.1,322.1 217.7,328.6 208.6,333.9 202.1,352.1 193,344.3"/>
<polygon fill="#6d7f9f" points="202.1,339.1 208.6,333.9 212.5,339.1 202.1,352.1"/>
<polygon fill="#d99694" points="215.1,322.1 230.7,310.4 241.1,318.2 246.4,323.4 243.8,329.9 233.3,326 228.1,332.6 217.7,328.6"/>
<polygon fill="#c98583" points="215.1,322.1 230.7,310.4 233.3,326 228.1,332.6 217.7,328.6"/>
<polygon fill="#44546e" points="228.1,332.6 233.3,326 236.6,328.6 231.4,337.1"/>
<polygon fill="#a9c4ec" points="208.6,333.9 217.7,328.6 228.1,332.6 231.4,337.1 250,331.2 250,352.1 239.8,352.1 220.3,352.1 212.5,339.1"/>
<polygon fill="#d99694" points="208.6,334.1 217.7,333.2 221,337.8 212.5,339.1"/>
<polygon fill="#b4c8ea" points="217.7,339.1 231.4,337.1 241.1,343 228.1,349.5"/>
<polygon fill="#55657f" points="220.3,352.1 239.8,352.1 233.3,372.9 222.9,361.2"/>
<polygon fill="#6a7b99" points="220.3,352.1 230.7,352.1 228.1,365.1 222.9,361.2"/>
<polygon fill="#8ba3c7" points="239.8,352.1 250,352.1 250,378.1 241.1,383.3 239.8,378.1 233.3,372.9"/>
<polygon fill="#a9c4ec" points="241.1,361.2 250,357.3 250,372.9 243.8,378.1"/>
<polygon fill="#5a6d90" points="163,348.2 172.1,337.8 185.2,343 181.2,362.5 173.4,372.9 165.6,359.9"/>
<polygon fill="#44546e" points="163,348.2 172.1,337.8 174.7,354.7 173.4,372.9 165.6,359.9"/>
<polygon fill="#8a4a1e" points="165.6,359.9 173.4,362.5 176,372.9 178,391.1 172.1,388.5 168.2,372.9"/>
<polygon fill="#44546e" points="164.3,357.3 174.1,362.5 175.4,372.9 169.5,372.9"/>
<polygon fill="#8ba3c7" points="185.2,343 202.1,352.1 203.4,357.3 199.5,367.7 181.2,362.5"/>
<polygon fill="#b4c8ea" points="185.2,343 202.1,352.1 193,354.7"/>
<polygon fill="#7488ab" points="181.2,362.5 193,354.7 199.5,367.7 189.1,367.7"/>
<polygon fill="#d67d2e" points="179.9,367.7 199.5,367.7 195.6,383.3 189.1,388.5 181.2,378.1"/>
<polygon fill="#f0913f" points="179.3,389.8 185.2,391.1 187.8,400 180.6,400"/>
<polygon fill="#245868" points="185.2,388.5 193,383.3 193,400 187.8,400"/>
<polygon fill="#9ab4dc" points="174.1,362.5 178,372.9 182.6,400 178,400 176,378.1"/>
<polygon fill="#d99694" points="173.4,361.2 174.7,361.5 180.6,383.3 179.3,383.3"/>
<polygon fill="#4d5d7a" points="194.3,378.1 202.1,361.2 209.9,350.1 222.9,361.2 228.1,372.9 230.7,383.3 222.9,400 189.1,400"/>
<polygon fill="#36435a" points="202.1,361.2 209.9,350.1 211.2,372.9 204.7,378.1"/>
<polygon fill="#5d6e8d" points="209.9,350.1 222.9,361.2 220.3,378.1 211.2,372.9"/>
<polygon fill="#36435a" points="222.9,361.2 228.1,372.9 230.7,383.3 220.3,378.1"/>
<polygon fill="#8a4a1e" points="193,380.7 204.7,378.1 211.2,375.5 220.3,379.4 230.7,383.3 228.1,392.4 217.7,391.1 204.7,389.8 190.4,393.8"/>
<polygon fill="#a85c25" points="204.7,378.1 211.2,375.5 213.8,389.8 204.7,389.8"/>
<polygon fill="#245868" points="190.4,393.8 204.7,389.8 217.7,391.1 220.3,400 189.1,400"/>
<polygon fill="#d99694" points="209.2,350.1 210.9,350.8 228.8,372.9 227.5,373.6"/>
<polygon fill="#a9c4ec" points="228.1,372.9 239.8,378.1 241.1,383.3 230.7,384"/>
<polygon fill="#f0913f" points="230.7,384 241.1,383.3 250,378.1 250,400 220.3,400 228.1,392.4"/>
<polygon fill="#d67d2e" points="230.7,384 235.9,383.3 233.3,400 222.9,400 228.1,392.4"/>
<polygon fill="#44546e" points="158.1,355 173.8,361.2 177.7,372.2 165.2,372.2 161.2,367.5"/>
<polygon fill="#8a4a1e" points="165.2,372.2 177.7,372.2 180,376.9 181.6,395.6 173.8,392.5 167.5,376.9"/>
<polygon fill="#44546e" points="92,329.7 106.1,333.1 110,328.4 131.9,336.2 152.2,331.6 158.4,342.5 160.8,353.4 156.9,356.6 124.1,345.6 94.4,340.9"/>
<polygon fill="#8a4a1e" points="94.4,340.9 124.1,345.6 156.9,356.6 160,364.4 153.8,368.3 124.1,361.2 99.1,355"/>
<polygon fill="#f0913f" points="153.8,361.2 160,364.4 156.9,368.3"/>
<polygon fill="#245868" points="99.1,355 124.1,361.2 153.8,368.3 153.8,376.9 146.7,380.8 124.1,375.3 103.8,373.8"/>
<polygon fill="#2f7e96" points="153.8,368.3 160,365.2 147.5,387.8 145.9,380.8"/>
<polygon fill="#3d2d52" points="103.8,373.8 124.1,375.3 146.7,380.8 147.5,387.8 138.1,394.1 129.5,392.5 116.2,387.8 106.9,389.4"/>
<polygon fill="#55662e" points="105.8,388.8 116.2,387.5 131.6,392.8 121.4,402.5"/>
<polygon fill="#7b5050" points="110,328.4 117,320.6 131.9,320.6 146.7,324.5 152.2,331.6 131.9,336.2"/>
<polygon fill="#96605f" points="120.9,320.6 131.9,320.6 131.9,336.2"/>
<polygon fill="#5e6e3c" points="124.8,302.7 128,308.9 131.9,320.6 117,320.6"/>
<polygon fill="#46522a" points="131.9,320.6 146.7,324.5 152.2,331.6 144.4,326.9"/>
<polygon fill="#c6dc9c" points="128,308.9 137.3,308.9 146.7,324.5 131.9,320.6"/>
<polygon fill="#d6ebb4" points="130.3,308.9 135.8,308.9 134.2,320.9 131.9,320.6"/>
<polygon fill="#c4bde0" points="124.8,302.7 138.9,301.9 137.3,308.9 128,308.9"/>
<polygon fill="#d99694" points="144.4,323.8 147.5,322.2 150.6,328.4 148.3,326.9"/>
<polygon fill="#44546e" points="146.7,319.1 150.6,311.2 153.8,326.9 150.6,328.4"/>
<path d="M91.2 323.8L246.6 414.3M246.6 414.3L367.6 390.3" fill="none" stroke="#b9b9b9" stroke-width="1.2"/>
<g font-size="12.2" fill="#000" text-anchor="end">
<text x="79" y="277.5">6000000</text>
<text x="79" y="294.6">4000000</text>
<text x="79" y="311.7">2000000</text>
<text x="79" y="328.8">0</text>
<text x="79" y="345.9">-2000000</text>
<text x="79" y="363">-4000000</text>
<text x="79" y="380.1">-6000000</text>
<text x="79" y="397.2">-8000000</text>
<text x="79" y="414.3">-10000000</text>
<text x="79" y="431.4">-12000000</text>
<text x="79" y="448.5">-14000000</text>
</g>
<g font-size="12.2" fill="#000" text-anchor="middle">
<text x="91" y="349.5">1</text>
<text x="107" y="359.5">3</text>
<text x="123" y="369.5">5</text>
<text x="140" y="379">7</text>
<text x="156" y="389.5">9</text>
<text x="172.5" y="401.2">11</text>
<text x="189.6" y="410.5">13</text>
<text x="206" y="420.5">15</text>
<text x="221.7" y="428.5">17</text>
<text x="238" y="438.5">19</text>
</g>
<g font-size="12.5" fill="#000" text-anchor="middle">
<text transform="translate(235 447) rotate(-50)" x="0" y="4">系列1</text>
<text transform="translate(266 440) rotate(-50)" x="0" y="4">系列3</text>
<text transform="translate(295 434) rotate(-50)" x="0" y="4">系列5</text>
<text transform="translate(324.6 428) rotate(-50)" x="0" y="4">系列7</text>
<text transform="translate(356 420) rotate(-50)" x="0" y="4">系列9</text>
</g>
<g font-size="12.5" fill="#000">
<rect x="439.5" y="303" width="6.5" height="6.5" fill="#b2a2c7"/><text x="449" y="311.3">4000000-6000000</text>
<rect x="439.5" y="327" width="6.5" height="6.5" fill="#c3d69b"/><text x="449" y="335.3">2000000-4000000</text>
<rect x="439.5" y="351" width="6.5" height="6.5" fill="#d99694"/><text x="449" y="359.3">0-2000000</text>
<rect x="439.5" y="375" width="6.5" height="6.5" fill="#95b3d7"/><text x="449" y="383.3">-2000000-0</text>
<rect x="439.5" y="399" width="6.5" height="6.5" fill="#e58b3c"/><text x="449" y="407.3">-4000000--2000000</text>
<rect x="439.5" y="423" width="6.5" height="6.5" fill="#46a3bd"/><text x="449" y="431.3">-6000000--4000000</text>
<rect x="439.5" y="447" width="6.5" height="6.5" fill="#7a5f9b"/><text x="449" y="455.3">-8000000--6000000</text>
<rect x="439.5" y="472" width="6.5" height="6.5" fill="#93b255"/><text x="449" y="480.3">-10000000--8000000</text>
<rect x="439.5" y="496" width="6.5" height="6.5" fill="#b54a47"/><text x="449" y="504.3">-12000000--10000000</text>
<rect x="439.5" y="520" width="6.5" height="6.5" fill="#4577b0"/><text x="449" y="528.3">-14000000--12000000</text>
</g>
</svg><!--/CHART1--></div>

<!-- vertical scrollbar -->
<div class="abs" style="left:1008px;top:165px;width:16px;height:532px;background:#a9c4ea"></div>
<div class="abs" style="left:1009px;top:165px;width:15px;height:8px;background:linear-gradient(#fff,#d5e1f2);border:1px solid #8fa6c8"></div>
<div class="abs" style="left:1012px;top:167px;width:8px;height:2px;background:#5a6b87"></div>
<div class="abs" style="left:1011px;top:178px;width:0;height:0;border-left:5px solid transparent;border-right:5px solid transparent;border-bottom:5px solid #5a78ad"></div>
<div class="abs" style="left:1009px;top:190px;width:15px;height:425px;border:1px solid #8fa6c8;border-radius:2px;background:linear-gradient(90deg,#f2f6fb,#d9e3f1 45%,#bfcde3)"></div>
<div class="abs" style="left:1012px;top:399px;width:8px;height:1px;background:#6e84a8;box-shadow:0 2px 0 #6e84a8,0 4px 0 #6e84a8,0 6px 0 #6e84a8"></div>
<div class="abs" style="left:1011px;top:686px;width:0;height:0;border-left:5px solid transparent;border-right:5px solid transparent;border-top:5px solid #5a78ad"></div>
<!-- sheet tab bar -->
<div class="abs" style="left:0;top:697px;width:1024px;height:17px;background:linear-gradient(#9bb7e2,#7d9fd3)"></div>
<div class="abs" style="left:0;top:697px;width:62px;height:17px;background:linear-gradient(#dbe7f7,#c5d8f2)"></div>
<svg class="abs" style="left:0;top:697px" width="620" height="17" viewBox="0 0 620 17">
 <g fill="#2a56a0"><path d="M6 4h1.500v8H6zM12 4v8L7.500 8zM26 4v8l-5-4zM35 4v8l5-4zM46 4v8l4.500-4zM51 4h1.500v8H51z"/></g>
 <path d="M122 1L131 1L119 16H258L270 1H345L357 1L345 16H120z" fill="none"/>
 <path d="M120 16L133 0.500H254L242 16z" fill="#d4e2f6" stroke="#7b95bd" stroke-width="1"/>
 <path d="M190 16L203 0.500H272L260 16z" fill="#d4e2f6" stroke="#7b95bd" stroke-width="1"/>
 <path d="M260 16L273 0.500H334L322 16z" fill="#d4e2f6" stroke="#7b95bd" stroke-width="1"/>
 <path d="M322 16L335 0.500H367L355 16z" fill="#d4e2f6" stroke="#7b95bd" stroke-width="1"/>
 <path d="M120 16L133 0.500H200L188 16z" fill="#d4e2f6" stroke="#7b95bd" stroke-width="1"/>
 <path d="M62 0V12Q62 16 66 16H116Q120 16 123 12L133 0z" fill="#fff" stroke="#7b95bd" stroke-width="1"/>
 <rect x="340" y="4" width="9" height="8" rx="2" fill="#fff" stroke="#4a6ea8"/><circle cx="340" cy="4" r="2.500" fill="#f4c23c"/>
 <rect x="606" y="1" width="6" height="15" fill="#eef3fa" stroke="#7b95bd"/><rect x="608.500" y="4" width="1" height="9" fill="#444"/>
 <path d="M617 8.500l5-5v10z" fill="#3f5f96"/>
</svg>
<div class="abs stab" style="left:72px">等高線</div>
<div class="abs stab" style="left:130px">検証結果</div>
<div class="abs stab" style="left:201px;letter-spacing:-1.500px">検証シート</div>
<div class="abs stab" style="left:277px;letter-spacing:-.3px">Sheet1</div>
<div class="abs" style="left:777px;top:699px;width:157px;height:14px;border:1px solid #7b95bd;border-radius:2px;background:linear-gradient(#f3f6fb,#d7e1f0 50%,#bfcde4)"></div>
<div class="abs" style="left:851px;top:703px;width:1px;height:6px;background:#6e84a8;box-shadow:2px 0 0 #6e84a8,4px 0 0 #6e84a8,6px 0 0 #6e84a8"></div>
<div class="abs" style="left:989px;top:701px;width:0;height:0;border-top:5px solid transparent;border-bottom:5px solid transparent;border-left:5px solid #3f5f96"></div>
<div class="abs" style="left:1001px;top:698px;width:7px;height:15px;background:#eef3fa;border:1px solid #7b95bd"></div><div class="abs" style="left:1004px;top:701px;width:1px;height:9px;background:#444"></div>
<div class="abs" style="left:1008px;top:697px;width:16px;height:17px;background:#b7cdee"></div>
<!-- status bar -->
<div class="abs" style="left:0;top:714px;width:1024px;height:22px;background:linear-gradient(#e3eefb 0,#cfe0f7 40%,#c0d5f3 50%,#d5e4f8 100%);border-top:1px solid #86a4d2"></div>
<div class="abs" style="left:780px;top:715px;width:244px;height:21px;background:linear-gradient(#bcd2f1 0,#a3c0ea 45%,#8fb1e3 55%,#a5c2ec 100%)"></div>
<div class="abs" style="left:5px;top:719px;font-size:12px;color:#15428b;letter-spacing:-2.500px">コマンド</div>
<div class="abs" style="left:51px;top:716px;width:1px;height:18px;background:#9db9e3;box-shadow:1px 0 0 #f2f7fd"></div>
<div class="abs" style="left:788px;top:716px;width:56px;height:19px;border:1px solid #8aa7d4;border-radius:2px;background:linear-gradient(#dbe6f6,#b9cdea)"></div>
<div class="abs" style="left:789px;top:717px;width:18px;height:17px;background:linear-gradient(#fbdca5,#f7c061)"></div>
<svg class="abs" style="left:789px;top:717px" width="54" height="17" viewBox="0 0 54 17">
 <rect x="4.500" y="3.500" width="10" height="10" fill="#fff" stroke="#6b625a"/><path d="M4.500 7h10M4.500 10.500h10M8 3.500v10M11.500 3.500v10" stroke="#6b625a" stroke-width="1"/>
 <rect x="22.500" y="3.500" width="10" height="10" fill="#e8e8e8" stroke="#6b6b6b"/><rect x="25" y="6" width="5" height="5" fill="#fff" stroke="#777" stroke-width=".8"/>
 <rect x="40.500" y="3.500" width="10" height="10" fill="#ddd" stroke="#6b6b6b"/><rect x="42" y="5" width="3" height="4" fill="#fff"/><rect x="46" y="5" width="3" height="6" fill="#fff"/>
</svg>
<div class="abs" style="left:851px;top:719px;font-size:12px;color:#15428b;letter-spacing:-1.1px">100%</div>
<div class="abs" style="left:903px;top:724px;width:97px;height:1px;background:#5f7db1;box-shadow:0 1px 0 #dfe9f8"></div>
<div class="abs" style="left:885px;top:718px;width:15px;height:15px;border-radius:50%;border:1px solid #6b7f9f;background:radial-gradient(circle at 50% 30%,#fff,#c9d6ea)"></div><div class="abs" style="left:889px;top:724px;width:7px;height:2px;background:#555"></div>
<div class="abs" style="left:1003px;top:718px;width:15px;height:15px;border-radius:50%;border:1px solid #6b7f9f;background:radial-gradient(circle at 50% 30%,#fff,#c9d6ea)"></div><div class="abs" style="left:1007px;top:724px;width:7px;height:2px;background:#555"></div><div class="abs" style="left:1009.500px;top:721.500px;width:2px;height:7px;background:#555"></div>
<svg class="abs" style="left:946px;top:717px" width="11" height="16" viewBox="0 0 11 16"><path d="M1.500 1.500h8v8l-4 5-4-5z" fill="#e6edf7" stroke="#5e6f8c"/></svg>
<!-- taskbar -->
<div class="abs" style="left:0;top:736px;width:1024px;height:32px;background:linear-gradient(#767b83 0,#4b4f56 10%,#34373c 25%,#1b1d20 42%,#070708 52%,#0a0a0b 100%);border-top:1px solid #2a2d32"></div>
<div class="abs" style="left:8px;top:732px;width:42px;height:42px;border-radius:50%;background:radial-gradient(circle at 50% 30%,#8fd0f4 0,#3a86c6 40%,#174a86 70%,#0b2a55 100%);border:1px solid #0d1a2c;box-shadow:0 0 3px #000"></div>
<svg class="abs" style="left:16px;top:740px" width="27" height="25" viewBox="0 0 24 22">
 <path d="M2 3q5-3 9 0v7q-4-3-9 0z" fill="#e8502a"/><path d="M13 3q5 2 9-1v7q-4 3-9 1z" fill="#8dc63f"/>
 <path d="M2 12q5-3 9 0v7q-4-3-9 0z" fill="#3b9ae0"/><path d="M13 12q5 2 9-1v7q-4 3-9 1z" fill="#f7c325"/>
</svg>
<svg class="abs" style="left:64px;top:742px" width="96" height="20" viewBox="0 0 96 20">
 <rect x="1" y="2" width="16" height="13" fill="#2a57b8" stroke="#dfe8f5" stroke-width="1.200"/><rect x="4" y="5" width="6" height="4" fill="#e8eef8"/><rect x="8" y="9" width="7" height="4" fill="#e8eef8"/>
 <rect x="24" y="2" width="16" height="12" fill="#5c8fe0" stroke="#c5d4ea" stroke-width="1.200"/><rect x="26" y="4" width="12" height="7" fill="#3c6ed0"/><rect x="28" y="15" width="8" height="2" fill="#9ab"/>
 <circle cx="55" cy="9" r="6" fill="none" stroke="#2f8ae8" stroke-width="3"/><path d="M49 9h12" stroke="#2f8ae8" stroke-width="2.500"/><path d="M47 13q8-12 16-9" fill="none" stroke="#f2b632" stroke-width="1.600"/>
 <path d="M81 3l3 3-3 3M85 3l3 3-3 3" fill="none" stroke="#fff" stroke-width="1.300"/>
</svg>
<div class="abs tbtn" style="left:163px;width:129px"><span>Sleipnir - [[m...</span></div>
<div class="abs" style="left:169px;top:744px;width:17px;height:17px;background:#3a69c9;border:1px solid #9fb6e8"></div><div class="abs" style="left:172px;top:747px;width:11px;height:11px;border-radius:50%;border:2px solid #cfe0ff"></div>
<div class="abs tbtn" style="left:297px;width:130px"><span>DVD RW ドラ...</span></div>
<div class="abs" style="left:303px;top:745px;width:15px;height:15px;border-radius:50%;background:radial-gradient(circle,#555 0,#555 15%,#f2f2f2 20%,#bbb 60%,#e8e8e8 100%)"></div>
<div class="abs tbtn" style="left:430px;width:130px;background:linear-gradient(#2c2e32 0,#1b1c1f 45%,#050506 50%,#08090a 100%);border-color:#4a4d52"><span style="left:28px">Microsoft Exc...</span></div>
<div class="abs" style="left:438px;top:745px;width:15px;height:15px;background:#e9f5e4;border:1px solid #3b8a2c;color:#2a7a1f;font:bold 12px 'Liberation Sans',sans-serif;text-align:center;line-height:13px">X</div>
<div class="abs tbtn" style="left:564px;width:131px"><span style="left:28px">Microsoft Vis...</span></div>
<svg class="abs" style="left:572px;top:743px" width="18" height="18" viewBox="0 0 18 18"><rect x="4" y="6" width="13" height="11" fill="#fff" stroke="#333" stroke-width=".8"/><rect x="4" y="6" width="13" height="3" fill="#2aa6d8"/><path d="M3 3l5 2-3 4z" fill="#d22"/><path d="M2 12l6-5" stroke="#f0d030" stroke-width="2"/></svg>
<!-- tray -->
<div class="abs" style="left:707px;top:743px;width:16px;height:16px;border-radius:4px;background:#e23a3a;border:1px solid #ffb0b0"></div><div class="abs" style="left:710px;top:746px;width:10px;height:10px;border-radius:50%;border:2px solid #fff"></div>
<div class="abs" style="left:726px;top:741px;font-size:16px;color:#fff;font-family:'Liberation Sans','IPAGothic',sans-serif">あ</div>
<div class="abs" style="left:746px;top:741px;font-size:16px;color:#fff;font-family:'Liberation Sans','IPAGothic',sans-serif">般</div>
<svg class="abs" style="left:767px;top:741px" width="60" height="22" viewBox="0 0 60 22">
 <path d="M2 9h14l-2 9H4z" fill="#e8b24c" stroke="#f7dfa8" stroke-width=".8"/><path d="M5 9l3-6M9 9l4-5" stroke="#d33" stroke-width="2"/><circle cx="14" cy="4" r="2.500" fill="#4aa3ee"/>
 <path d="M21 9l8-4 7 4v7l-7 3-8-3z" fill="#e8a83c" stroke="#f7dfa8" stroke-width=".8"/><path d="M21 11l8 3 7-3" stroke="#9a6a1c" fill="none"/>
 <circle cx="49" cy="11" r="7.500" fill="#2336b8" stroke="#dfe4ff" stroke-width="1.200"/>
</svg>
<div class="abs" style="left:811px;top:744px;width:12px;color:#fff;font:bold 13px 'Liberation Sans',sans-serif;text-align:center">?</div>
<div class="abs" style="left:831px;top:739px;color:#fff;font:bold 8px 'Liberation Mono',monospace;letter-spacing:0">CAPS</div>
<div class="abs" style="left:831px;top:751px;color:#fff;font:bold 8px 'Liberation Mono',monospace">KANA</div>
<svg class="abs" style="left:856px;top:740px" width="16" height="22" viewBox="0 0 16 22"><path d="M4 3.500h6v3H4z M2 5.500h6v3H2z" fill="none" stroke="#fff" stroke-width="1.200"/><path d="M3 14h6l-3 3.500z" fill="#fff"/></svg>
<svg class="abs" style="left:874px;top:740px" width="100" height="24" viewBox="0 0 100 24">
 <path d="M8 7l-4 4.500 4 4.500" fill="none" stroke="#fff" stroke-width="1.800"/>
 <ellipse cx="23" cy="12" rx="8" ry="8" fill="#b9bcc0"/><path d="M19 8l8 8M27 8l-8 8" stroke="#f4f4f4" stroke-width="2.200"/>
 <circle cx="38" cy="8" r="3" fill="#59a4e8"/><circle cx="44" cy="7" r="3" fill="#6ec04a"/><path d="M34 16q4-7 8 0zM40 15q4-7 8 0z" fill="#3f8fd8"/><circle cx="45" cy="17" r="3.500" fill="#d22"/>
 <rect x="63" y="5" width="10" height="8" fill="#3d86e0" stroke="#e6f0ff"/><rect x="66" y="9" width="10" height="8" fill="#3d86e0" stroke="#e6f0ff"/><circle cx="72" cy="17" r="4" fill="#36a84a"/>
 <path d="M81 9h3l4-4v14l-4-4h-3z" fill="#f2f2f2"/><path d="M90 8q3 4 0 8" fill="none" stroke="#3fc46a" stroke-width="1.500"/>
</svg>
<div class="abs" style="left:979px;top:743px;color:#fff;font-size:13px">6:44</div>
</body>
</html>
